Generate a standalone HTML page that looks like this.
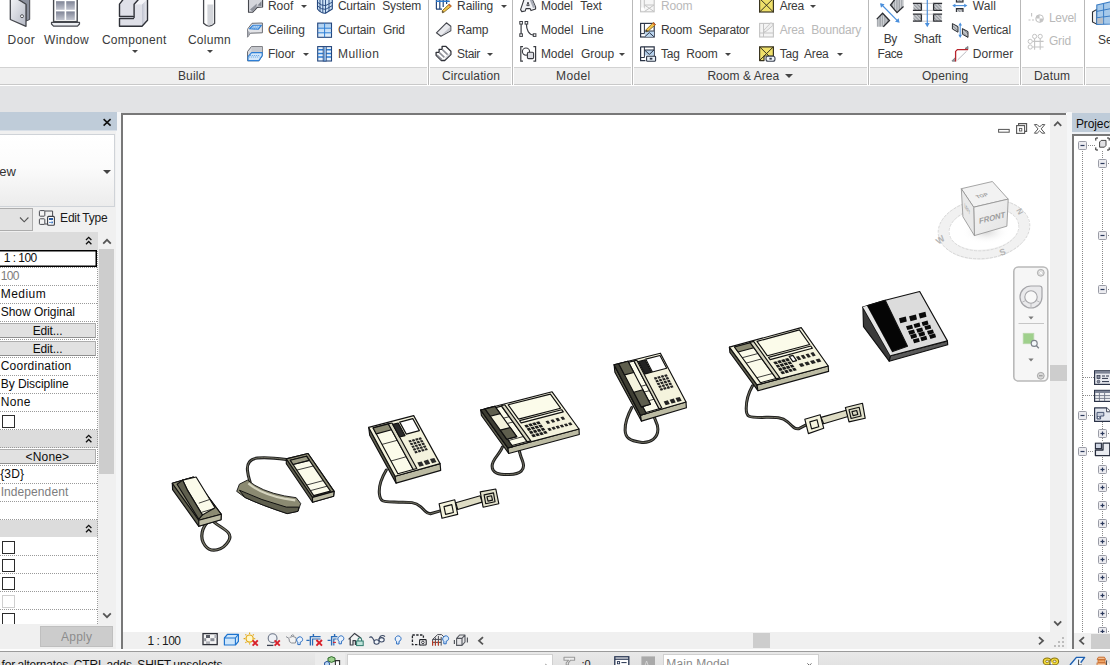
<!DOCTYPE html>
<html><head><meta charset="utf-8"><title>Autodesk Revit</title>
<style>
*{box-sizing:border-box;margin:0;padding:0}
html,body{width:1110px;height:665px;overflow:hidden;background:#e2e3e5;font-family:"Liberation Sans",sans-serif;font-size:12px;color:#3a3a3a}
.a{position:absolute}
.t{position:absolute;white-space:nowrap;line-height:14px;height:14px;font-size:12px}
.r{word-spacing:4.5px}
.dis{color:#b9b9b9}
.k{color:#111}
svg{position:absolute;overflow:visible}
.sep{position:absolute;top:0;width:1px;height:85px;background:#d9d9d9}
.band{position:absolute;top:68px;height:17px;background:#f0f0f0}
.dd{position:absolute;width:0;height:0;border-left:3px solid transparent;border-right:3px solid transparent;border-top:3px solid #444}
</style></head><body>

<div class="a" style="left:0;top:0;width:1110px;height:67px;background:#fff"></div>
<div class="a" style="left:0;top:67px;width:1110px;height:19px;background:#fff"></div>
<div class="a" style="left:0px;top:67px;width:427px;height:18px;background:#efefef;border-top:1px solid #d2d2d2;border-bottom:1px solid #c9c9c9"></div>
<div class="a" style="left:430px;top:67px;width:81px;height:18px;background:#efefef;border-top:1px solid #d2d2d2;border-bottom:1px solid #c9c9c9"></div>
<div class="a" style="left:514px;top:67px;width:117px;height:18px;background:#efefef;border-top:1px solid #d2d2d2;border-bottom:1px solid #c9c9c9"></div>
<div class="a" style="left:634px;top:67px;width:233px;height:18px;background:#efefef;border-top:1px solid #d2d2d2;border-bottom:1px solid #c9c9c9"></div>
<div class="a" style="left:870px;top:67px;width:149px;height:18px;background:#efefef;border-top:1px solid #d2d2d2;border-bottom:1px solid #c9c9c9"></div>
<div class="a" style="left:1022px;top:67px;width:61px;height:18px;background:#efefef;border-top:1px solid #d2d2d2;border-bottom:1px solid #c9c9c9"></div>
<div class="a" style="left:1086px;top:67px;width:25px;height:18px;background:#efefef;border-top:1px solid #d2d2d2;border-bottom:1px solid #c9c9c9"></div>
<div class="a" style="left:428px;top:0;width:1px;height:85px;background:#b9b9b9"></div>
<div class="a" style="left:512px;top:0;width:1px;height:85px;background:#b9b9b9"></div>
<div class="a" style="left:632px;top:0;width:1px;height:85px;background:#b9b9b9"></div>
<div class="a" style="left:868px;top:0;width:1px;height:85px;background:#b9b9b9"></div>
<div class="a" style="left:1020px;top:0;width:1px;height:85px;background:#b9b9b9"></div>
<div class="a" style="left:1084px;top:0;width:1px;height:85px;background:#b9b9b9"></div>
<span class="t" style="letter-spacing:0.39px;left:7.6px;top:32.5px;">Door</span>
<span class="t" style="letter-spacing:0.38px;left:44.1px;top:32.5px;">Window</span>
<span class="t" style="letter-spacing:0.31px;left:101.9px;top:32.5px;">Component</span>
<span class="t" style="letter-spacing:0.27px;left:187.9px;top:32.5px;">Column</span>
<i class="dd" style="left:131.5px;top:50px"></i>
<i class="dd" style="left:206.6px;top:50px"></i>
<span class="t" style="letter-spacing:-0.45px;left:883.8px;top:32.3px;">By</span>
<span class="t" style="letter-spacing:-0.45px;left:877.6px;top:47.4px;">Face</span>
<span class="t" style="letter-spacing:-0.11px;left:913.7px;top:32.3px;">Shaft</span>
<span class="t" style="left:1097.9px;top:32.5px;">Se</span>
<span class="t r" style="letter-spacing:0.05px;left:267.9px;top:-1.5px;">Roof</span>
<i class="dd" style="left:300.5px;top:5px"></i>
<span class="t r" style="letter-spacing:0.05px;left:267.9px;top:22.5px;">Ceiling</span>
<span class="t r" style="letter-spacing:-0.06px;left:267.9px;top:46.5px;">Floor</span>
<i class="dd" style="left:302.5px;top:53px"></i>
<span class="t r" style="letter-spacing:-0.20px;word-spacing:3.97px;left:337.9px;top:-1.5px;">Curtain System</span>
<span class="t r" style="letter-spacing:-0.19px;word-spacing:4.50px;left:337.9px;top:22.5px;">Curtain Grid</span>
<span class="t r" style="letter-spacing:0.50px;left:337.9px;top:46.5px;">Mullion</span>
<span class="t r" style="letter-spacing:-0.11px;left:457.1px;top:-1.5px;">Railing</span>
<i class="dd" style="left:500.7px;top:5px"></i>
<span class="t r" style="letter-spacing:-0.24px;left:457.1px;top:22.5px;">Ramp</span>
<span class="t r" style="letter-spacing:-0.40px;left:457.1px;top:46.5px;">Stair</span>
<i class="dd" style="left:487.3px;top:53px"></i>
<span class="t r" style="letter-spacing:-0.15px;word-spacing:4.50px;left:540.9px;top:-1.5px;">Model Text</span>
<span class="t r" style="letter-spacing:-0.05px;word-spacing:4.50px;left:540.9px;top:22.5px;">Model Line</span>
<span class="t r" style="letter-spacing:-0.06px;word-spacing:4.50px;left:540.9px;top:46.5px;">Model Group</span>
<i class="dd" style="left:619.4px;top:53px"></i>
<span class="t r dis" style="letter-spacing:-0.11px;left:660.9px;top:-1.5px;">Room</span>
<span class="t r" style="letter-spacing:-0.20px;word-spacing:3.15px;left:660.9px;top:22.5px;">Room Separator</span>
<span class="t r" style="letter-spacing:-0.20px;word-spacing:3.60px;left:660.9px;top:46.5px;">Tag Room</span>
<i class="dd" style="left:725.4px;top:53px"></i>
<span class="t r" style="letter-spacing:-0.29px;left:779.7px;top:-1.5px;">Area</span>
<i class="dd" style="left:809.6px;top:5px"></i>
<span class="t r dis" style="letter-spacing:-0.20px;word-spacing:3.94px;left:779.7px;top:22.5px;">Area Boundary</span>
<span class="t r" style="letter-spacing:-0.20px;word-spacing:3.13px;left:779.7px;top:46.5px;">Tag Area</span>
<i class="dd" style="left:836.6px;top:53px"></i>
<span class="t r" style="letter-spacing:0.14px;left:972.7px;top:-1.5px;">Wall</span>
<span class="t r" style="letter-spacing:-0.14px;left:972.7px;top:22.5px;">Vertical</span>
<span class="t r" style="letter-spacing:0.12px;left:972.7px;top:46.5px;">Dormer</span>
<span class="t r dis" style="letter-spacing:-0.27px;left:1048.9px;top:10.600000000000001px;">Level</span>
<span class="t r dis" style="letter-spacing:-0.16px;left:1048.9px;top:34.3px;">Grid</span>
<span class="t" style="letter-spacing:0.18px;left:177.9px;top:68.5px;">Build</span>
<span class="t" style="letter-spacing:0.13px;left:441.9px;top:68.5px;">Circulation</span>
<span class="t" style="letter-spacing:0.38px;left:556.0px;top:68.5px;">Model</span>
<span class="t" style="letter-spacing:0.05px;word-spacing:0.00px;left:707.4px;top:68.5px;">Room &amp; Area</span>
<span class="t" style="letter-spacing:0.15px;left:921.9px;top:68.5px;">Opening</span>
<span class="t" style="letter-spacing:0.21px;left:1033.9px;top:68.5px;">Datum</span>
<i class="dd" style="left:785.4px;top:74px;border-left-width:4px;border-right-width:4px;border-top-width:4px"></i>
<svg style="left:0;top:0" width="1110" height="90" viewBox="0 0 1110 90">
<defs>
<linearGradient id="gs" x1="0" y1="0" x2="1" y2="1"><stop offset="0" stop-color="#f4f5f8"/><stop offset="1" stop-color="#b4b8c4"/></linearGradient>
<linearGradient id="gp" x1="0" y1="0" x2="0" y2="1"><stop offset="0" stop-color="#7f8496"/><stop offset="1" stop-color="#c3c6d0"/></linearGradient>
<linearGradient id="gr" x1="0" y1="0" x2="1" y2="0"><stop offset="0" stop-color="#c0c3d0"/><stop offset="1" stop-color="#f0f0f4"/></linearGradient>
<linearGradient id="gb" x1="0" y1="0" x2="0" y2="1"><stop offset="0" stop-color="#a9cdf0"/><stop offset="1" stop-color="#e6f1fb"/></linearGradient>
<pattern id="hat" width="2.5" height="2.5" patternUnits="userSpaceOnUse" patternTransform="rotate(-45)"><rect width="2.5" height="2.5" fill="#c9cbcf"/><rect width="1" height="2.5" fill="#8f9399"/></pattern>
<pattern id="vst" width="2.4" height="2.4" patternUnits="userSpaceOnUse"><rect width="2.4" height="2.4" fill="#9fa3a8"/><rect width="1" height="2.4" fill="#d4d6da"/></pattern>
</defs>
<polygon points="16,-2 29.7,-2 29.7,19.5 26,21 26,4.3" fill="#8c919e" stroke="#45474d" stroke-width="1"/>
<polygon points="10.3,-2 10.3,19.5 26,26.3 26,4.3 16,-2" fill="url(#gs)" stroke="#45474d" stroke-width="1.3" stroke-linejoin="round"/>
<circle cx="22" cy="16.2" r="1.5" fill="#fff" stroke="#45474d" stroke-width="0.9"/>
<rect x="53.6" y="-3" width="23.6" height="24.6" fill="#fff" stroke="#45474d" stroke-width="1.4"/>
<rect x="56" y="1.2" width="8.6" height="8.6" fill="url(#gp)"/>
<rect x="66.2" y="1.2" width="8.6" height="8.6" fill="url(#gp)"/>
<rect x="56" y="11.4" width="8.6" height="8.6" fill="url(#gp)"/>
<rect x="66.2" y="11.4" width="8.6" height="8.6" fill="url(#gp)"/>
<path d="M51.5,22.3 H79.5 V24 L77.5,26.2 H53.5 L51.5,24 Z" fill="#eceef2" stroke="#45474d" stroke-width="1.2" stroke-linejoin="round"/>
<polygon points="123.5,-1 119.5,4.1 119.5,26.2 142,26.2 147.5,20.3 147.5,-1" fill="#dfe0e8"/>
<polygon points="142,26.2 147.5,20.3 147.5,-1 142,4" fill="url(#gr)"/>
<polygon points="134.1,4.3 138.9,-1 147.5,-1 142,4.5" fill="#f4f4f8"/>
<path d="M123.5,-1 L119.5,4.1 V16.4 H132.8 M119.5,18.6 V26.2 H142 L147.5,20.3 V-1 M138.9,-1 L134.1,4.3 V17.4 M119.5,18.5 H133.5" fill="none" stroke="#2f3138" stroke-width="1.4" stroke-linejoin="round" stroke-linecap="round"/>
<path d="M203.6,-2 V23.3 Q209,28.8 214.6,23.3 V-2" fill="#fff" stroke="#45474d" stroke-width="1.3"/>
<path d="M207.4,4.5 H213.3 V24 Q210,26 207.4,25.3 Z" fill="#d3d5da"/>
<polygon points="895.2,-1 890.5,5 897,12.6 903.5,6.5 903.5,-1" fill="url(#vst)"/>
<path d="M895.2,-1 L890.5,5 L897,12.6 L903.5,6.5" fill="none" stroke="#2c2e33" stroke-width="1.3"/>
<polygon points="876.8,19.1 882.6,13.3 889.5,20.5 883.3,26.7 876.8,26.7" fill="url(#vst)"/>
<path d="M876.8,19.1 L882.6,13.3 L889.5,20.5 L883.3,26.7" fill="none" stroke="#2c2e33" stroke-width="1.3"/>
<path d="M881,4 L898.5,21.8" stroke="#4a8fdc" stroke-width="1.2"/><path d="M880,3.2 L884.6,4.2 L881,7.8Z M899.6,22.8 L895,21.8 L898.6,18.2Z" fill="#4a8fdc"/>
<rect x="913.4" y="3.4" width="8.2" height="7" fill="url(#hat)"/>
<path d="M912.9,3.4 H922.1 M912.9,10.4 H922.1" stroke="#2c2e33" stroke-width="1.3"/>
<rect x="933.4" y="3.4" width="8.2" height="7" fill="url(#hat)"/>
<path d="M932.9,3.4 H942.1 M932.9,10.4 H942.1" stroke="#2c2e33" stroke-width="1.3"/>
<rect x="913.4" y="14.2" width="8.2" height="7" fill="url(#hat)"/>
<path d="M912.9,14.2 H922.1 M912.9,21.2 H922.1" stroke="#2c2e33" stroke-width="1.3"/>
<rect x="933.4" y="14.2" width="8.2" height="7" fill="url(#hat)"/>
<path d="M932.9,14.2 H942.1 M932.9,21.2 H942.1" stroke="#2c2e33" stroke-width="1.3"/>
<path d="M921.4,3.4 V10.4 M933.6,3.4 V10.4 M921.4,14.2 V21.2 M933.6,14.2 V21.2" stroke="#2c2e33" stroke-width="1.3"/>
<path d="M921.5,3.4 H933.5 M921.5,10.4 H933.5 M921.5,14.2 H933.5 M921.5,21.2 H933.5" stroke="#b5b7bb" stroke-width="0.8"/>
<path d="M927.3,-1 V25" stroke="#4a8fdc" stroke-width="1.2"/><path d="M927.3,27.2 L924.9,23 H929.7Z" fill="#4a8fdc"/>
<polygon points="248.5,-2 248.5,12.2 252.8,12.2 257.3,7.4 262.6,7 262.6,-2" fill="#d4d6dc" stroke="#45474d" stroke-width="1.1" stroke-linejoin="round"/>
<polygon points="250,9.5 252.5,11.5 256.5,6.8 256.8,3.5" fill="#8e929c"/><polygon points="261.5,1 261.5,6 257.5,5.6" fill="#7f838d"/>
<polygon points="248,28.5 252,23.3 262.4,23 262.4,32.8 250.5,33.2 247.5,37.2 247.5,29.6" fill="#e3e4e8" stroke="#6a6c72" stroke-width="1" stroke-linejoin="round"/>
<polygon points="249.4,28.8 252.9,25.3 261.4,25.3 258.4,29.2" fill="#bcd9f5" stroke="#2e7fd6" stroke-width="1.1" stroke-linejoin="round"/>
<path d="M251,27 H260 M250,28.2 H259" stroke="#2e7fd6" stroke-width="0.6" stroke-dasharray="1.2 0.8"/>
<polygon points="247.5,30 250.5,33.2 247.5,37.2" fill="#a5a8b0"/>
<polygon points="247.5,51.6 251.4,46.6 262.4,46.6 262.4,55.6 258.9,60.8 247.5,60.8" fill="#d9dade" stroke="#6a6c72" stroke-width="1" stroke-linejoin="round"/>
<polygon points="251.4,46.9 262.2,46.9 262.2,52 251.4,52" fill="#c6c8cd"/>
<polygon points="248,56.6 251.6,52.6 262.2,52.6 262.2,55.6 258.9,60.6 248,60.6" fill="#d5e8fa" stroke="#2e7fd6" stroke-width="1.1" stroke-linejoin="round"/>
<path d="M250,55.5 H260 M249,57 H259.5" stroke="#2e7fd6" stroke-width="0.6" stroke-dasharray="1.2 0.8"/>
<path d="M317.5,-2 V9 Q321,13.5 325.5,13.2 L332.3,9 V-2 Z" fill="#cfe4f8" stroke="#24467c" stroke-width="1.1" stroke-linejoin="round"/>
<path d="M317.5,2.2 Q321,5.8 325.5,5.6 L332.3,2.2 M317.5,5.8 Q321,9.6 325.5,9.4 L332.3,5.6 M320,-2 V11.5 M322.8,-2 V12.8 M325.5,-2 V13.2 M329,-2 V11" fill="none" stroke="#24467c" stroke-width="0.9"/>
<rect x="317.7" y="23.1" width="13.8" height="14.2" fill="url(#gb)" stroke="#24467c" stroke-width="1.1"/>
<path d="M324.6,23 V37.3 M317.7,28.2 H331.5 M317.7,32.8 H331.5" stroke="#2e7fd6" stroke-width="1"/>
<rect x="317.7" y="46.6" width="13.8" height="14.4" fill="#e9f3fc" stroke="#24467c" stroke-width="1.1"/>
<path d="M318,49.8 H331 M318,53.4 H331 M318,57 H331" stroke="#2e7fd6" stroke-width="1.5"/>
<rect x="323.2" y="46.6" width="3" height="14.4" fill="#dcebf9" stroke="#24467c" stroke-width="0.9"/><path d="M324.7,47 V61" stroke="#2e7fd6" stroke-width="0.8"/>
<path d="M436.4,-2 V9 M439.8,-2 V9 M443.2,-2 V7 M446.6,-2 V4 M436,1.3 H449.5 M436,9.2 H442" stroke="#24467c" stroke-width="1.2" fill="none"/>
<path d="M436,1.3 H449.5" stroke="#2e7fd6" stroke-width="1.3"/>
<polygon points="449.3,4 451.4,6.2 444.2,12 442.4,12.8 442.2,10.8" fill="#f3c64a" stroke="#7a5a18" stroke-width="0.8" stroke-linejoin="round"/><polygon points="442.2,10.8 442.4,12.8 444.2,12" fill="#444"/><polygon points="448.2,5 450.3,7.1 451.4,6.2 449.3,4" fill="#d9622b"/>
<polygon points="436.4,32.8 446.4,22.8 450.8,26.3 450.8,30.8 440.9,36.2" fill="#e9eaee" stroke="#45474d" stroke-width="1.1" stroke-linejoin="round"/>
<polygon points="450.3,26.8 450.3,30.5 441.2,35.5" fill="#c4c6cd"/>
<polygon points="436.1,52.3 439.1,52.3 439.1,49.3 442.1,49.3 442.1,46.3 445.7,46.3 450.9,51.3 450.9,54.6 444.7,60.5 441.4,60.5 436.1,55.2" fill="#fff" stroke="#2f3138" stroke-width="1.3" stroke-linejoin="round"/>
<path d="M439.4,52.6 L444.4,57.4 M442.4,49.6 L447.6,54.6 M437,55 L441.8,59.6" stroke="#8e9098" stroke-width="1.6" fill="none"/>
<path d="M445,59.6 L450.2,54.6 V52.4 L445.2,57.4 Z" fill="#c9cbd2"/>
<path d="M524.5,-2 L520.6,9.6 L521.8,11.6 L525.2,11 L526,8.6 L530.2,8.6 L531,10.6 L535.6,9 L535.6,7 L531.6,-2 Z" fill="#f1f2f5" stroke="#35373d" stroke-width="1.1" stroke-linejoin="round"/>
<polygon points="531.4,-2 535.4,7.2 533,8 529,-2" fill="#a8acb6"/><path d="M526.8,5.6 L528,2 L529.2,5.6 Z" fill="#fff" stroke="#35373d" stroke-width="0.9"/>
<path d="M521.1,24 V34 M526.4,24 C526.4,30 529,35 533.6,35.1" fill="none" stroke="#3a3c42" stroke-width="1.2"/>
<rect x="519.8000000000001" y="21.5" width="2.6" height="2.6" fill="#fff" stroke="#3a3c42" stroke-width="1"/>
<rect x="525.1" y="21.5" width="2.6" height="2.6" fill="#fff" stroke="#3a3c42" stroke-width="1"/>
<rect x="519.8000000000001" y="33.800000000000004" width="2.6" height="2.6" fill="#fff" stroke="#3a3c42" stroke-width="1"/>
<rect x="533.3000000000001" y="33.800000000000004" width="2.6" height="2.6" fill="#fff" stroke="#3a3c42" stroke-width="1"/>
<path d="M523,46.6 H520.8 V61.2 H523 M533.4,46.6 H535.6 V61.2 H533.4" fill="none" stroke="#3a3c42" stroke-width="1.2"/>
<circle cx="526" cy="51.6" r="3.6" fill="#fff" stroke="#3a3c42" stroke-width="1.1"/><rect x="527.4" y="52.2" width="6.2" height="6.4" rx="1.2" fill="#dcdde2" stroke="#3a3c42" stroke-width="1.1"/>
<rect x="640.6" y="-3" width="13.6" height="14.8" fill="#f6f6f6" stroke="#c4c4c4" stroke-width="1.1"/><path d="M644.5,5 L654,11.5 M654,5 L644.5,11.5 M644.5,5 H654 M644.3,-2 V8.5" stroke="#c4c4c4" stroke-width="1" fill="none"/><path d="M641,9 H644.3" stroke="#fff" stroke-width="3"/>
<rect x="640.6" y="23.4" width="13.6" height="13.6" fill="#fff" stroke="#2b3446" stroke-width="1.2"/>
<polygon points="644.8,31 654,31 654,36.8 644.8,36.8" fill="#bcd6ef"/><path d="M644.5,31 H654 M644.8,36.8 L649.3,32.6 L654,36.8 M644.4,23.4 V33.6 M640.6,33.6 H644.4" stroke="#2b3446" stroke-width="1" fill="none"/>
<polygon points="653.4,22.4 655.6,24.6 648.2,31 646.2,31.8 646,29.8" fill="#f3c64a" stroke="#7a5a18" stroke-width="0.8" stroke-linejoin="round"/><polygon points="646,29.8 646.2,31.8 648.2,31" fill="#333"/><polygon points="652.3,23.4 654.5,25.6 655.6,24.6 653.4,22.4" fill="#d9622b"/>
<path d="M640.6,46.8 H654.2 V56 M640.6,46.8 V60.6 H645.4" fill="none" stroke="#2b3446" stroke-width="1.2"/>
<polygon points="644.6,50 654,50 654,55.5 644.6,55.5" fill="#b4cfea"/><path d="M644.4,46.8 V57.5 M644.4,50 H654 M644.6,50 L649.3,54.4 L654,50 M640.6,57.5 H644.4" stroke="#2b3446" stroke-width="1" fill="none"/>
<rect x="646.6" y="56.2" width="9" height="5" rx="0.8" fill="#e9f1f9" stroke="#2b3446" stroke-width="1.1"/><rect x="649.8" y="57.8" width="2.6" height="1.8" fill="#2b3446"/>
<rect x="759.6" y="-3" width="13.8" height="15" fill="#efe06a" stroke="#3a3520" stroke-width="1.2"/><path d="M759.6,-1.5 L773.4,12 M773.4,-1.5 L759.6,12" stroke="#3a3520" stroke-width="1"/>
<rect x="759.6" y="23.4" width="13.8" height="13.6" fill="#f4f4f4" stroke="#c4c4c4" stroke-width="1.1"/><path d="M763.5,23.4 V37 M759.6,33 H773.4 M763.5,33 L773,24" stroke="#c4c4c4" stroke-width="1" fill="none"/><polygon points="771,22.6 773.4,25 766,31.4 764,32.2 763.8,30.2" fill="#eee" stroke="#c4c4c4" stroke-width="0.9"/>
<path d="M759.6,46.8 H773.4 V56 H764 V60.6 H759.6 Z" fill="#efe06a" stroke="#3a3520" stroke-width="1.2" stroke-linejoin="round"/><path d="M759.6,46.8 L769,56 M773.4,46.8 L760,60" stroke="#3a3520" stroke-width="1"/>
<rect x="766" y="56.2" width="9" height="5" rx="2" fill="#eef3f9" stroke="#3b4252" stroke-width="1.1"/><rect x="769.4" y="57.8" width="2.4" height="1.8" fill="#3b4252"/>
<rect x="956.4" y="-3" width="6.6" height="5" fill="url(#hat)" stroke="#2c2e33" stroke-width="1.1"/><rect x="956.4" y="8.6" width="6.6" height="3.4" fill="url(#hat)"/><path d="M956.4,12 V8.6 H963 V12" fill="none" stroke="#2c2e33" stroke-width="1.1"/>
<path d="M953.5,5.6 H966" stroke="#4a8fdc" stroke-width="1.1"/><path d="M952.2,5.6 L955.4,3.8 V7.4Z M967.4,5.6 L964.2,3.8 V7.4Z" fill="#4a8fdc"/>
<polygon points="952.4,23.6 958,26.6 958,32.2 952.4,29" fill="url(#hat)" stroke="#2c2e33" stroke-width="1"/><polygon points="962.4,28.6 968,31.6 968,37.4 962.4,34.2" fill="url(#hat)" stroke="#2c2e33" stroke-width="1"/>
<path d="M960.2,24 V36.4" stroke="#4a8fdc" stroke-width="1.1"/><path d="M960.2,22.4 L958.4,25.6 H962Z M960.2,38 L958.4,34.8 H962Z" fill="#4a8fdc"/>
<polygon points="965,48.4 968,46.4 968,49.6" fill="#9a9da3" stroke="#5a5c62" stroke-width="0.6"/><polygon points="952.2,60.6 955.4,57.4 955.4,61.2 952.2,61.2" fill="#9a9da3" stroke="#5a5c62" stroke-width="0.6"/>
<path d="M955.6,61.4 V51.4 L957.4,49.6 H968" fill="none" stroke="#b8242c" stroke-width="1.3"/><path d="M957.6,60 L966.6,51.2" stroke="#b0b2b8" stroke-width="0.9"/>
<path d="M1028.5,20 H1036" stroke="#c4c4c4" stroke-width="1.1" stroke-dasharray="2 1.5"/><path d="M1031.6,13 V16.5" stroke="#c4c4c4" stroke-width="1.1"/><circle cx="1039.6" cy="18.6" r="3.8" fill="#fff" stroke="#c4c4c4" stroke-width="1"/><path d="M1039.6,14.8 A3.8,3.8 0 0 0 1035.8,18.6 H1039.6Z M1039.6,22.4 A3.8,3.8 0 0 0 1043.4,18.6 H1039.6Z" fill="#c4c4c4"/>
<path d="M1034.6,38.6 V49.8 M1040.2,38.6 V49.8 M1032.4,41.4 H1043.6 M1032.4,47 H1043.6" stroke="#c4c4c4" stroke-width="1.1"/>
<circle cx="1034.6" cy="36.4" r="2.1" fill="#fff" stroke="#c4c4c4" stroke-width="1"/>
<circle cx="1040.2" cy="36.4" r="2.1" fill="#fff" stroke="#c4c4c4" stroke-width="1"/>
<circle cx="1030.2" cy="41.4" r="2.1" fill="#fff" stroke="#c4c4c4" stroke-width="1"/>
<circle cx="1030.2" cy="47" r="2.1" fill="#fff" stroke="#c4c4c4" stroke-width="1"/>
<polygon points="1092.5,12 1096.8,9.4 1096.8,24.2 1092.5,22" fill="#f0f0f0" stroke="#2c2e33" stroke-width="1.1"/>
<polygon points="1096.8,5 1112,1.5 1112,24 1096.8,24.4" fill="#a6c9ea" stroke="#3a7cc4" stroke-width="1.1"/>
<path d="M1096.8,11.4 L1112,8.4 M1096.8,17.8 L1112,15.8 M1103.6,3.6 V24.2" stroke="#3a7cc4" stroke-width="1"/><polygon points="1097.4,18.2 1103.2,17.4 1103.2,23.6 1097.4,23.8" fill="#b9bfc6"/>
</svg>
<div class="a" style="left:0;top:112px;width:116px;height:539px;background:#f0f0f0"></div>
<div class="a" style="left:116px;top:112px;width:5px;height:539px;background:#f5f6f7"></div>
<div class="a" style="left:0;top:112px;width:117px;height:19px;background:#bfccd9;border-bottom:1px solid #d9e0e8"></div>
<svg style="left:102px;top:118px" width="10" height="9" viewBox="0 0 10 9"><path d="M1.6,1.2 L8.6,7.6 M8.6,1.2 L1.6,7.6" stroke="#111" stroke-width="1.6"/></svg>
<div class="a" style="left:-2px;top:134px;width:117px;height:73px;background:linear-gradient(#ffffff 0%,#fbfbfb 45%,#ececec 100%);border:1px solid #cfd3d8"></div>
<span class="t" style="left:-0.7px;top:165.3px;font-size:13px;color:#333">ew</span>
<i class="dd" style="left:103px;top:170px;border-left-width:4px;border-right-width:4px;border-top-width:4px;border-top-color:#444"></i>
<div class="a" style="left:-2px;top:208px;width:35px;height:23px;background:#e2e2e2;border:1px solid #adadad"></div>
<svg style="left:19px;top:216px" width="11" height="8" viewBox="0 0 11 8"><path d="M1,1.5 L5.2,5.8 L9.4,1.5" fill="none" stroke="#555" stroke-width="1.1"/></svg>
<svg style="left:38px;top:209px" width="19" height="18" viewBox="0 0 19 18">
<rect x="1.4" y="1.6" width="5.4" height="5.6" rx="0.8" fill="#f4f4f4" stroke="#4a4c52" stroke-width="1"/>
<rect x="1.4" y="9.8" width="5.4" height="5.6" rx="0.8" fill="#f4f4f4" stroke="#4a4c52" stroke-width="1"/>
<path d="M6.8,2 H14.6 V7 M6.8,15 H9.5" fill="none" stroke="#4a4c52" stroke-width="1"/>
<rect x="9.6" y="7.4" width="6.8" height="8.8" rx="1" fill="#fff" stroke="#3c3e44" stroke-width="1.1"/>
<rect x="11" y="9" width="4" height="2" fill="#2e5c9e"/><path d="M11,13.4 H15 M13.6,12.2 L15,13.4 L13.6,14.6" fill="none" stroke="#2e6fc0" stroke-width="0.8"/>
</svg>
<span class="t k" style="letter-spacing:-0.20px;word-spacing:-0.70px;left:60.1px;top:210.8px;color:#1a1a1a">Edit Type</span>
<div class="a" style="left:0;top:232px;width:98px;height:392px;background:#fff"></div>
<div class="a" style="left:98px;top:232px;width:18px;height:392px;background:#f0f0f0"></div>
<div class="a" style="left:99px;top:249px;width:15px;height:225px;background:#cdcdcd"></div>
<svg style="left:102px;top:238px" width="10" height="7" viewBox="0 0 10 7"><path d="M1.2,5.6 L5,1.8 L8.8,5.6" fill="none" stroke="#555" stroke-width="1.8"/></svg>
<svg style="left:102px;top:612px" width="10" height="7" viewBox="0 0 10 7"><path d="M1.2,1.4 L5,5.2 L8.8,1.4" fill="none" stroke="#555" stroke-width="1.8"/></svg>
<div class="a" style="left:0;top:232px;width:98px;height:18px;background:#dcdcdc"></div>
<svg style="left:85px;top:236px" width="8" height="10" viewBox="0 0 8 10"><path d="M1,4 L3.7,1.3 L6.4,4 M1,8.2 L3.7,5.5 L6.4,8.2" fill="none" stroke="#111" stroke-width="1.3"/></svg>
<div class="a" style="left:0;top:430px;width:98px;height:18px;background:#dcdcdc"></div>
<svg style="left:85px;top:434px" width="8" height="10" viewBox="0 0 8 10"><path d="M1,4 L3.7,1.3 L6.4,4 M1,8.2 L3.7,5.5 L6.4,8.2" fill="none" stroke="#111" stroke-width="1.3"/></svg>
<div class="a" style="left:0;top:520px;width:98px;height:17px;background:#dcdcdc"></div>
<svg style="left:85px;top:524px" width="8" height="10" viewBox="0 0 8 10"><path d="M1,4 L3.7,1.3 L6.4,4 M1,8.2 L3.7,5.5 L6.4,8.2" fill="none" stroke="#111" stroke-width="1.3"/></svg>
<div class="a" style="left:0;top:267px;width:98px;height:1px;background:repeating-linear-gradient(90deg,#9a9a9a 0 1px,transparent 1px 2px)"></div>
<div class="a" style="left:0;top:285px;width:98px;height:1px;background:repeating-linear-gradient(90deg,#9a9a9a 0 1px,transparent 1px 2px)"></div>
<div class="a" style="left:0;top:303px;width:98px;height:1px;background:repeating-linear-gradient(90deg,#9a9a9a 0 1px,transparent 1px 2px)"></div>
<div class="a" style="left:0;top:321px;width:98px;height:1px;background:repeating-linear-gradient(90deg,#9a9a9a 0 1px,transparent 1px 2px)"></div>
<div class="a" style="left:0;top:339px;width:98px;height:1px;background:repeating-linear-gradient(90deg,#9a9a9a 0 1px,transparent 1px 2px)"></div>
<div class="a" style="left:0;top:357px;width:98px;height:1px;background:repeating-linear-gradient(90deg,#9a9a9a 0 1px,transparent 1px 2px)"></div>
<div class="a" style="left:0;top:375px;width:98px;height:1px;background:repeating-linear-gradient(90deg,#9a9a9a 0 1px,transparent 1px 2px)"></div>
<div class="a" style="left:0;top:393px;width:98px;height:1px;background:repeating-linear-gradient(90deg,#9a9a9a 0 1px,transparent 1px 2px)"></div>
<div class="a" style="left:0;top:411px;width:98px;height:1px;background:repeating-linear-gradient(90deg,#9a9a9a 0 1px,transparent 1px 2px)"></div>
<div class="a" style="left:0;top:429px;width:98px;height:1px;background:repeating-linear-gradient(90deg,#9a9a9a 0 1px,transparent 1px 2px)"></div>
<div class="a" style="left:0;top:447px;width:98px;height:1px;background:repeating-linear-gradient(90deg,#9a9a9a 0 1px,transparent 1px 2px)"></div>
<div class="a" style="left:0;top:465px;width:98px;height:1px;background:repeating-linear-gradient(90deg,#9a9a9a 0 1px,transparent 1px 2px)"></div>
<div class="a" style="left:0;top:483px;width:98px;height:1px;background:repeating-linear-gradient(90deg,#9a9a9a 0 1px,transparent 1px 2px)"></div>
<div class="a" style="left:0;top:501px;width:98px;height:1px;background:repeating-linear-gradient(90deg,#9a9a9a 0 1px,transparent 1px 2px)"></div>
<div class="a" style="left:0;top:519px;width:98px;height:1px;background:repeating-linear-gradient(90deg,#9a9a9a 0 1px,transparent 1px 2px)"></div>
<div class="a" style="left:0;top:555px;width:98px;height:1px;background:repeating-linear-gradient(90deg,#9a9a9a 0 1px,transparent 1px 2px)"></div>
<div class="a" style="left:0;top:573px;width:98px;height:1px;background:repeating-linear-gradient(90deg,#9a9a9a 0 1px,transparent 1px 2px)"></div>
<div class="a" style="left:0;top:591px;width:98px;height:1px;background:repeating-linear-gradient(90deg,#9a9a9a 0 1px,transparent 1px 2px)"></div>
<div class="a" style="left:0;top:609px;width:98px;height:1px;background:repeating-linear-gradient(90deg,#9a9a9a 0 1px,transparent 1px 2px)"></div>
<div class="a" style="left:97px;top:250px;width:1px;height:374px;background:repeating-linear-gradient(0deg,#9a9a9a 0 1px,transparent 1px 2px)"></div>
<div class="a" style="left:-2px;top:250px;width:99px;height:17px;background:#fff;border:1px solid #000;box-shadow:inset 0 0 0 0.5px #000"></div>
<span class="t" style="left:3.8px;top:251.10000000000002px;color:#0c0c0c;letter-spacing:-0.55px">1 : 100</span>
<span class="t" style="left:0.7px;top:269.1px;color:#7d7d7d;letter-spacing:-0.6px">100</span>
<span class="t" style="letter-spacing:0.46px;left:0.7px;top:287.1px;color:#0c0c0c">Medium</span>
<span class="t" style="letter-spacing:-0.03px;word-spacing:0.00px;left:0.7px;top:305.1px;color:#0c0c0c">Show Original</span>
<div class="a" style="left:-1px;top:323px;width:97px;height:15px;background:#e1e1e1;border:1px solid #adadad;border-bottom-color:#8f8f8f"></div>
<span class="t" style="letter-spacing:-0.15px;left:32.7px;top:323.8px;color:#0c0c0c">Edit...</span>
<div class="a" style="left:-1px;top:341px;width:97px;height:15px;background:#e1e1e1;border:1px solid #adadad;border-bottom-color:#8f8f8f"></div>
<span class="t" style="letter-spacing:-0.15px;left:32.7px;top:341.8px;color:#0c0c0c">Edit...</span>
<span class="t" style="letter-spacing:0.23px;left:0.7px;top:359.1px;color:#0c0c0c">Coordination</span>
<span class="t" style="letter-spacing:-0.05px;word-spacing:0.00px;left:0.7px;top:377.1px;color:#0c0c0c">By Discipline</span>
<span class="t" style="letter-spacing:0.34px;left:0.7px;top:395.1px;color:#0c0c0c">None</span>
<div class="a" style="left:2px;top:415px;width:13px;height:13px;background:#fff;border:1px solid #2b2b2b"></div>
<div class="a" style="left:-1px;top:449px;width:97px;height:15px;background:#e1e1e1;border:1px solid #adadad;border-bottom-color:#8f8f8f"></div>
<span class="t" style="letter-spacing:0.18px;left:25.5px;top:449.8px;color:#0c0c0c">&lt;None&gt;</span>
<span class="t" style="letter-spacing:0.15px;left:0.2px;top:467.3px;color:#0c0c0c">{3D}</span>
<span class="t" style="letter-spacing:0.08px;left:0.7px;top:485.3px;color:#7d7d7d">Independent</span>
<div class="a" style="left:2px;top:541px;width:13px;height:13px;background:#fff;border:1px solid #2b2b2b"></div>
<div class="a" style="left:2px;top:559px;width:13px;height:13px;background:#fff;border:1px solid #2b2b2b"></div>
<div class="a" style="left:2px;top:577px;width:13px;height:13px;background:#fff;border:1px solid #2b2b2b"></div>
<div class="a" style="left:2px;top:595px;width:13px;height:13px;background:#fff;border:1px solid #cfcfcf"></div>
<div class="a" style="left:2px;top:613px;width:13px;height:11px;background:#fff;border:1px solid #2b2b2b;border-bottom:none"></div>
<div class="a" style="left:40px;top:626px;width:73px;height:21px;background:#cccccc;border:1px solid #bfbfbf"></div>
<span class="t" style="letter-spacing:0.29px;left:60.9px;top:629.8px;color:#8c8c8c">Apply</span>
<div class="a" style="left:121px;top:113px;width:946px;height:538px;background:#fff"></div>
<div class="a" style="left:121px;top:113px;width:945px;height:2px;background:#787878"></div>
<div class="a" style="left:121px;top:113px;width:2px;height:536px;background:#787878"></div>
<div class="a" style="left:1067px;top:112px;width:5px;height:539px;background:#f5f6f7"></div>
<div class="a" style="left:1050px;top:115px;width:17px;height:518px;background:#f0f0f0"></div>
<div class="a" style="left:1050px;top:365px;width:17px;height:16px;background:#cdcdcd"></div>
<svg style="left:1053px;top:120px" width="10" height="7" viewBox="0 0 10 7"><path d="M1.2,5.8 L4.7,2.2 L8.2,5.8" fill="none" stroke="#555" stroke-width="1.8"/></svg>
<svg style="left:1053px;top:620px" width="10" height="7" viewBox="0 0 10 7"><path d="M1.2,1.4 L4.7,5 L8.2,1.4" fill="none" stroke="#555" stroke-width="1.8"/></svg>
<div class="a" style="left:123px;top:632px;width:944px;height:17px;background:#f0f0f0"></div>
<div class="a" style="left:753px;top:633px;width:17px;height:15px;background:#cdcdcd"></div>
<svg style="left:477px;top:636px" width="8" height="10" viewBox="0 0 8 10"><path d="M6,1.2 L2,4.8 L6,8.4" fill="none" stroke="#555" stroke-width="1.8"/></svg>
<svg style="left:1037px;top:636px" width="8" height="10" viewBox="0 0 8 10"><path d="M2,1.2 L6,4.8 L2,8.4" fill="none" stroke="#555" stroke-width="1.8"/></svg>
<svg style="left:1054px;top:637px" width="10" height="10" viewBox="0 0 10 10"><rect x="8" y="0" width="2" height="2" fill="#bdbdbd"/><rect x="4" y="4" width="2" height="2" fill="#bdbdbd"/><rect x="8" y="4" width="2" height="2" fill="#bdbdbd"/><rect x="0" y="8" width="2" height="2" fill="#bdbdbd"/><rect x="4" y="8" width="2" height="2" fill="#bdbdbd"/><rect x="8" y="8" width="2" height="2" fill="#bdbdbd"/></svg>
<span class="t" style="left:147.6px;top:633.9px;color:#1a1a1a;letter-spacing:-0.55px">1 : 100</span>
<svg style="left:996px;top:121px" width="52" height="15" viewBox="996 121 52 15">
<rect x="998.6" y="129.4" width="10.6" height="2.8" fill="#fff" stroke="#555" stroke-width="1"/>
<path d="M1018.6,125.6 V123.6 H1026.6 V131.4 H1024.6" fill="none" stroke="#555" stroke-width="1.1"/>
<rect x="1016.6" y="125.6" width="8" height="7.8" fill="#fff" stroke="#555" stroke-width="1.1"/>
<rect x="1019.4" y="128.4" width="2.4" height="2.6" fill="#fff" stroke="#555" stroke-width="0.9"/>
<path d="M1034.4,124.6 H1037.2 L1039.6,127 L1042,124.6 H1044.8 L1041.2,128.9 L1044.8,133.2 H1042 L1039.6,130.8 L1037.2,133.2 H1034.4 L1038,128.9 Z" fill="#fff" stroke="#555" stroke-width="1" stroke-linejoin="round"/>
</svg>
<svg style="left:195px;top:630px" width="280" height="19" viewBox="195 630 280 19">
<rect x="203" y="633.6" width="14.2" height="11" fill="#f4f4f4" stroke="#2e3038" stroke-width="1.3"/>
<rect x="206" y="635" width="4" height="3" fill="#5a5d66"/><rect x="210.4" y="638.2" width="4" height="3" fill="#8a8d96"/><rect x="204.2" y="638.2" width="2" height="3" fill="#8a8d96"/><rect x="206" y="641.4" width="4" height="2.6" fill="#b0b2b8"/><rect x="214.4" y="635" width="2.2" height="3" fill="#b0b2b8"/>
<path d="M224.4,638 L227.4,634.4 H238.4 V641.4 L235.4,645 H224.4 Z" fill="#cfe6fa" stroke="#1e74cf" stroke-width="1.2" stroke-linejoin="round"/><path d="M224.4,638 H235.4 V645 M235.4,638 L238.4,634.4" fill="none" stroke="#1e74cf" stroke-width="1.1"/>
<circle cx="249.6" cy="638.6" r="3.6" fill="#fff7c9" stroke="#e3a812" stroke-width="1.2"/><path d="M249.6,632.6 V634 M249.6,643.2 V644.6 M243.6,638.6 H245 M254.2,638.6 H255.2 M245.4,634.4 L246.4,635.4 M253.8,634.4 L252.8,635.4 M245.4,642.8 L246.4,641.8" stroke="#e3a812" stroke-width="1.1"/>
<path d="M252.6,640.4 L257.8,645.6 M257.8,640.4 L252.6,645.6" stroke="#d8202a" stroke-width="1.9"/>
<circle cx="272.6" cy="638.2" r="4.4" fill="#eef1f6" stroke="#6d7688" stroke-width="1.1"/><path d="M267,645.4 H273.4" stroke="#3a4050" stroke-width="1.3"/>
<path d="M274.6,640.4 L279.8,645.6 M279.8,640.4 L274.6,645.6" stroke="#d8202a" stroke-width="1.9"/>
<path d="M286,636.6 L289,638.4 Q288.6,642.6 291.6,643 H295.4 Q296.6,640 296,637.6 Q293,635.4 289.6,637.4 M291,635.8 Q292.6,634 294.2,635.6" fill="#f3f3f3" stroke="#8a8d94" stroke-width="1"/>
<path d="M298,637.6 a2.7,2.7 0 1 1 2.2,4.6 v2.4 h-2.4 v-2.4 a2.7,2.7 0 0 1 0.2,-4.6Z" fill="#eaf3fd" stroke="#2a6cc0" stroke-width="1"/>
<path d="M306.4,640.4 H309.4 M310.4,645.6 V636.6 H320.6 M313.4,634 V636" stroke="#2a6cb8" stroke-width="1.4" fill="none"/><path d="M312.6,645.6 V639 H320.6" stroke="#2a6cb8" stroke-width="1.2" fill="none"/>
<path d="M316.4,640 L322,645.6 M322,640 L316.4,645.6" stroke="#d8202a" stroke-width="1.9"/>
<path d="M327.6,640.4 H330.6 M331.6,645.6 V636.6 H337.4 M334.6,634 V636" stroke="#2a6cb8" stroke-width="1.4" fill="none"/><path d="M333.8,645.6 V639 H336.6" stroke="#2a6cb8" stroke-width="1.2" fill="none"/><path d="M333,642.4 H336" stroke="#d8202a" stroke-width="1"/>
<path d="M339.2,636.6 a2.7,2.7 0 1 1 2.2,4.6 v2.6 h-2.4 v-2.6 a2.7,2.7 0 0 1 0.2,-4.6Z" fill="#eaf3fd" stroke="#2a6cc0" stroke-width="1"/>
<path d="M348.6,639.4 L354.6,633.4 L360.8,638 M350.2,638.6 V645 H353 V640.6 H355.4 V645" fill="#f3f3f3" stroke="#3c3f48" stroke-width="1.2" stroke-linejoin="round"/>
<path d="M358,641 V639.6 a1.8,1.8 0 0 1 3.6,0 V641" fill="none" stroke="#2f7a6c" stroke-width="1.1"/><rect x="356.6" y="641" width="6.6" height="4.6" fill="#bfe3da" stroke="#2f7a6c" stroke-width="1"/>
<path d="M369.4,637.6 Q371,636 372.4,637.8 L374.6,641.4 M385,636.6 Q383,634.6 380.4,636.2 L378.8,639.6" fill="none" stroke="#3c4a66" stroke-width="1.1"/><ellipse cx="376.6" cy="642" rx="2.6" ry="2.2" fill="#f2f6fb" stroke="#3c4a66" stroke-width="1.1"/><ellipse cx="381.6" cy="639.8" rx="2.6" ry="2.2" fill="#f2f6fb" stroke="#3c4a66" stroke-width="1.1"/>
<path d="M396.4,636.6 a2.8,2.8 0 1 1 2.6,4.8 v2.6 h-2.4 v-2.6 a2.8,2.8 0 0 1 -0.2,-4.8Z" fill="#eaf3fd" stroke="#2a6cc0" stroke-width="1"/>
<rect x="412.4" y="635" width="11" height="9.6" fill="none" stroke="#22242a" stroke-width="1.3" stroke-dasharray="2.4 1.4"/><rect x="419.6" y="639.6" width="6.6" height="5.4" rx="0.8" fill="#fff" stroke="#22242a" stroke-width="1.1"/><circle cx="422.9" cy="642.4" r="1.3" fill="none" stroke="#22242a" stroke-width="0.9"/>
<path d="M432.6,645.6 V639.4 L437.6,634.6 H441.6 L444,637 M435.4,645.6 V637.6 M438.4,645.6 V636 M441.2,645.6 V637 M432.6,639.4 H441.2 M432.6,642.4 H441.2" fill="none" stroke="#4a4c54" stroke-width="1"/><path d="M432.6,645.6 V641 M435.4,645.6 V641 M438.4,645.6 V641" stroke="#c23a22" stroke-width="1.1"/>
<path d="M444,636.6 a2.7,2.7 0 1 1 2.2,4.6 v2.6 h-2.4 v-2.6 a2.7,2.7 0 0 1 0.2,-4.6Z" fill="#d7e9fb" stroke="#2a6cc0" stroke-width="1"/>
<path d="M456.6,638.4 L459.6,635 H465 V642 L462,645.4 H456.6 Z M456.6,638.4 H462 V645.4 M462,638.4 L465,635" fill="#e6e6e8" stroke="#55585f" stroke-width="1.1" stroke-linejoin="round"/><path d="M454.4,640 V644 M467.4,637.4 V642.4" stroke="#55585f" stroke-width="1.2"/>
</svg>
<svg style="left:930px;top:175px" width="130" height="215" viewBox="930 175 130 215">
<defs><radialGradient id="sh" cx="0.5" cy="0.5" r="0.5"><stop offset="0" stop-color="#d8d8d8"/><stop offset="1" stop-color="#ffffff" stop-opacity="0"/></radialGradient>
<linearGradient id="cf" x1="0" y1="0" x2="1" y2="1"><stop offset="0" stop-color="#f3f3f3"/><stop offset="1" stop-color="#e4e4e4"/></linearGradient></defs>
<g transform="rotate(-7 984 229)">
<ellipse cx="984" cy="229" rx="40.5" ry="25.5" fill="none" stroke="#f1f1f1" stroke-width="10"/>
<ellipse cx="984" cy="229" rx="46" ry="29.5" fill="none" stroke="#cfcfcf" stroke-width="0.8" stroke-dasharray="3 1.2"/>
<ellipse cx="984" cy="229" rx="35" ry="21.6" fill="none" stroke="#d4d4d4" stroke-width="0.8" stroke-dasharray="3 1.2"/>
</g>
<ellipse cx="986" cy="232" rx="24" ry="12" fill="url(#sh)"/>
<polygon points="961.3,188.7 992.4,181.5 1008.2,199.1 973.7,207.2" fill="#f2f2f2" stroke="#8f8f8f" stroke-width="0.8" stroke-linejoin="round"/>
<polygon points="973.7,207.2 1008.2,199.1 1006.9,226.2 974.4,235.6" fill="url(#cf)" stroke="#8f8f8f" stroke-width="0.8" stroke-linejoin="round"/>
<polygon points="961.3,188.7 973.7,207.2 974.4,235.6 962.9,216.7" fill="#e9e9e9" stroke="#8f8f8f" stroke-width="0.8" stroke-linejoin="round"/>
<text x="0" y="0" transform="matrix(0.93,-0.24,-0.03,1,979,224)" style="font-family:'Liberation Sans',sans-serif;font-weight:bold;fill:#9c9c9c;font-size:8.2px">FRONT</text>
<text x="0" y="0" transform="matrix(0.8,-0.2,0.5,0.55,977.5,198.5)" style="font-family:'Liberation Sans',sans-serif;font-weight:bold;fill:#9c9c9c;font-size:7px">TOP</text>
<text x="0" y="0" transform="matrix(0.35,0.55,0,1,964.5,207)" style="font-family:'Liberation Sans',sans-serif;font-weight:bold;fill:#9c9c9c;font-size:6px">LEFT</text>
<text x="0" y="0" transform="rotate(-35 940 240)" style="font-family:'Liberation Sans',sans-serif;font-weight:bold;fill:#9c9c9c;font-size:9px;fill:#b4b4b4" x="935" y="241"><tspan x="936" y="243">W</tspan></text>
<text transform="rotate(60 1021 213)" style="font-family:'Liberation Sans',sans-serif;font-weight:bold;fill:#9c9c9c;font-size:8px;fill:#b4b4b4"><tspan x="1016" y="216">N</tspan></text>
<text transform="rotate(-20 1003 252)" style="font-family:'Liberation Sans',sans-serif;font-weight:bold;fill:#9c9c9c;font-size:9px;fill:#b4b4b4"><tspan x="999.5" y="255">S</tspan></text>
<rect x="1013.8" y="267" width="34" height="114" rx="4.5" fill="#f6f6f6" stroke="#b9b9b9" stroke-width="1.6"/>
<circle cx="1040.8" cy="272.8" r="3.4" fill="#d9d9d9" stroke="#b0b0b0" stroke-width="1"/><path d="M1039.4,271.4 L1042.2,274.2 M1042.2,271.4 L1039.4,274.2" stroke="#fff" stroke-width="1"/>
<path d="M1031,286 A11,11 0 1 0 1042,297 V288.5 A2.5,2.5 0 0 0 1039.5,286 Z" fill="#e9e9eb" stroke="#a4a4a8" stroke-width="1.2"/>
<circle cx="1031" cy="297" r="6.2" fill="#f8f8f8" stroke="#a4a4a8" stroke-width="1.1"/><path d="M1022.4,302 L1026,300.4 M1039.6,302 L1036,300.4 M1031,303.2 V308" stroke="#b5b5b8" stroke-width="0.9"/>
<path d="M1028.4,316.6 H1033.6 L1031,319.4 Z" fill="#7a7a7a"/>
<path d="M1018.5,323.5 H1044" stroke="#c6c6c6" stroke-width="1"/>
<rect x="1023.2" y="333.3" width="10.6" height="10.4" fill="#9fd08c" stroke="#b8d8aa" stroke-width="0.8"/>
<circle cx="1034.2" cy="343.4" r="3" fill="#f4f8fb" stroke="#7d828a" stroke-width="1.1"/><path d="M1036.4,345.6 L1038.8,348.2" stroke="#7d828a" stroke-width="1.4"/>
<path d="M1028.4,358.6 H1033.6 L1031,361.4 Z" fill="#7a7a7a"/>
<circle cx="1040.8" cy="375.8" r="3.4" fill="#d9d9d9" stroke="#a8a8a8" stroke-width="1"/><path d="M1039,375.8 H1042.6" stroke="#8a8a8a" stroke-width="1"/>
</svg>
<svg style="left:123px;top:115px" width="927" height="517" viewBox="123 115 927 517">
<path d="M208.7,521.2 C202.4,526.6 198.8,537.4 205.1,545.6 S223.2,550.1 228.6,541.0 S221.3,528.4 214.1,522.1" fill="none" stroke="#1e1e1e" stroke-width="3.2" stroke-linecap="round" stroke-linejoin="round" shape-rendering="geometricPrecision"/>
<path d="M208.7,521.2 C202.4,526.6 198.8,537.4 205.1,545.6 S223.2,550.1 228.6,541.0 S221.3,528.4 214.1,522.1" fill="none" stroke="#7d7c6a" stroke-width="1.1" stroke-linecap="round" stroke-linejoin="round" shape-rendering="geometricPrecision"/>
<polygon points="172.3,483.3 193.4,477.0 221.3,514.3 221.0,519.8 198.8,526.3 172.6,489.6" fill="#5f5f4e" stroke="#101010" stroke-width="1.15" stroke-linejoin="round" />
<polygon points="172.3,483.3 193.4,477.0 221.3,514.3 198.8,520.3" fill="#8b8a72" stroke="#101010" stroke-width="1.15" stroke-linejoin="round" />
<polygon points="198.8,520.3 221.3,514.3 221.0,519.8 198.8,526.3" fill="#bcbba3" stroke="#101010" stroke-width="1.15" stroke-linejoin="round" />
<polygon points="182.6,480.1 196.1,477.0 215.0,507.7 202.4,514.9 187.1,489.6" fill="#fbfbea" stroke="#101010" stroke-width="1.15" stroke-linejoin="round" />
<polygon points="177.1,484.2 182.6,480.1 187.1,489.6 202.4,514.9 198.8,519.4" fill="#5f5f4e" stroke="#101010" stroke-width="1.15" stroke-linejoin="round" />
<path d="M198.8,503.2 L209.6,499.5 M201.9,512.2 L214.1,508.6" stroke="#101010" stroke-width="0.8"/>
<path d="M286.3,459.5 C275.5,458.0 264.7,457.1 257.4,458.0 S246.6,463.5 247.5,470.7 S249.3,478.8 250.2,482.4" fill="none" stroke="#1e1e1e" stroke-width="3.0" stroke-linecap="round" stroke-linejoin="round" shape-rendering="geometricPrecision"/>
<path d="M286.3,459.5 C275.5,458.0 264.7,457.1 257.4,458.0 S246.6,463.5 247.5,470.7 S249.3,478.8 250.2,482.4" fill="none" stroke="#7d7c6a" stroke-width="0.9" stroke-linecap="round" stroke-linejoin="round" shape-rendering="geometricPrecision"/>
<path d="M236.7,491.4 L239.4,484.2 L247.5,480.1 Q261.0,491.4 284.5,495.9 L296.2,497.7 L300.7,503.5 L298.0,511.3 L287.2,513.6 Q261.0,505.0 244.8,497.4 L238.0,492.3 Z" fill="#8b8a72" stroke="#101010" stroke-width="0.9" stroke-linejoin="round"/>
<path d="M248.4,483.3 Q261.0,494.1 284.5,498.6 L295.3,500.4" fill="none" stroke="#d6d5c0" stroke-width="2.2"/>
<path d="M239.4,490.2 Q261.0,500.4 286.3,507.1 L298.9,507.1 L298.0,511.3 L287.2,513.6 Q261.0,505.0 244.8,497.4 Z" fill="#5f5f4e" stroke="#101010" stroke-width="1"/>
<polygon points="286.3,458.9 308.0,453.5 334.1,491.4 333.6,496.3 312.5,502.3 286.3,463.8" fill="#5f5f4e" stroke="#101010" stroke-width="1.15" stroke-linejoin="round" />
<polygon points="286.3,458.9 308.0,453.5 334.1,491.4 312.5,497.4" fill="#8b8a72" stroke="#101010" stroke-width="1.15" stroke-linejoin="round" />
<polygon points="312.5,497.4 334.1,491.4 333.6,496.3 312.5,502.3" fill="#bcbba3" stroke="#101010" stroke-width="1.15" stroke-linejoin="round" />
<polygon points="290.3,460.2 306.5,456.2 330.5,491.1 313.7,495.6" fill="#fbfbea" stroke="#101010" stroke-width="1.15" stroke-linejoin="round" />
<polygon points="290.3,460.2 306.5,456.2 309.4,460.4 293.1,464.5" fill="#9c9b84" stroke="#101010" stroke-width="1.15" stroke-linejoin="round" />
<path d="M293.1,464.5 L309.4,460.4" stroke="#101010" stroke-width="0.8"/>
<path d="M296.8,470.1 L313.2,466.0" stroke="#101010" stroke-width="0.8"/>
<path d="M306.7,485.0 L323.3,480.6" stroke="#101010" stroke-width="0.8"/>
<path d="M310.5,490.6 L327.2,486.2" stroke="#101010" stroke-width="0.8"/>
<path d="M386.3,470.0 C381.4,478.2 378.5,486.1 379.4,493.9 S382.4,501.7 394.1,502.1 S413.7,500.7 420.5,506.6 S425.4,513.4 430.3,513.8 L439.5,511.1" fill="none" stroke="#1e1e1e" stroke-width="3.0" stroke-linecap="round" stroke-linejoin="round" shape-rendering="geometricPrecision"/>
<path d="M386.3,470.0 C381.4,478.2 378.5,486.1 379.4,493.9 S382.4,501.7 394.1,502.1 S413.7,500.7 420.5,506.6 S425.4,513.4 430.3,513.8 L439.5,511.1" fill="none" stroke="#7d7c6a" stroke-width="0.9" stroke-linecap="round" stroke-linejoin="round" shape-rendering="geometricPrecision"/>
<polygon points="368.7,427.4 395.1,476.3 396.1,483.1 369.7,435.2" fill="#5f5f4e" stroke="#101010" stroke-width="1.15" stroke-linejoin="round" />
<polygon points="395.1,476.3 440.1,463.6 440.7,470.4 396.1,483.1" fill="#bcbba3" stroke="#101010" stroke-width="1.15" stroke-linejoin="round" />
<polygon points="368.7,427.4 413.7,415.6 440.1,463.6 395.1,476.3" fill="#f4f3dd" stroke="#101010" stroke-width="1.15" stroke-linejoin="round" />
<polygon points="373.1,427.9 388.4,423.9 413.2,469.5 397.9,473.8" fill="#fbfbea" stroke="#101010" stroke-width="1.15" stroke-linejoin="round" />
<polygon points="373.1,427.9 388.4,423.9 391.6,429.8 376.3,433.9" fill="#8b8a72" stroke="#101010" stroke-width="1.15" stroke-linejoin="round" />
<path d="M382.0,444.4 L397.3,440.3" stroke="#101010" stroke-width="0.8"/>
<path d="M391.0,461.0 L406.3,456.7" stroke="#101010" stroke-width="0.8"/>
<polygon points="388.4,423.9 392.0,423.0 416.8,468.5 413.2,469.5" fill="#d9d8c2" stroke="#101010" stroke-width="1.15" stroke-linejoin="round" />
<polygon points="392.8,424.4 398.2,423.0 405.0,435.6 399.6,437.0" fill="#2a2a2a" stroke="#101010" stroke-width="1.15" stroke-linejoin="round" />
<polygon points="399.7,422.1 412.8,418.6 419.4,430.6 406.3,434.1" fill="#ffffff" stroke="#101010" stroke-width="1.15" stroke-linejoin="round" />
<polygon points="408.3,440.6 410.8,439.9 411.9,441.9 409.4,442.6" fill="#262626" stroke="none" stroke-width="0" stroke-linejoin="round" />
<polygon points="409.8,443.3 412.3,442.7 413.4,444.6 410.9,445.3" fill="#262626" stroke="none" stroke-width="0" stroke-linejoin="round" />
<polygon points="411.3,446.0 413.8,445.4 414.9,447.3 412.4,448.0" fill="#262626" stroke="none" stroke-width="0" stroke-linejoin="round" />
<polygon points="412.7,448.7 415.2,448.1 416.3,450.1 413.8,450.7" fill="#262626" stroke="none" stroke-width="0" stroke-linejoin="round" />
<polygon points="414.2,451.4 416.7,450.8 417.8,452.8 415.3,453.4" fill="#262626" stroke="none" stroke-width="0" stroke-linejoin="round" />
<polygon points="411.7,439.7 414.2,439.0 415.3,441.0 412.8,441.7" fill="#262626" stroke="none" stroke-width="0" stroke-linejoin="round" />
<polygon points="413.2,442.4 415.7,441.7 416.7,443.7 414.3,444.4" fill="#262626" stroke="none" stroke-width="0" stroke-linejoin="round" />
<polygon points="414.6,445.1 417.1,444.4 418.2,446.4 415.7,447.1" fill="#262626" stroke="none" stroke-width="0" stroke-linejoin="round" />
<polygon points="416.1,447.8 418.6,447.1 419.7,449.1 417.2,449.8" fill="#262626" stroke="none" stroke-width="0" stroke-linejoin="round" />
<polygon points="417.6,450.5 420.1,449.8 421.2,451.8 418.7,452.5" fill="#262626" stroke="none" stroke-width="0" stroke-linejoin="round" />
<polygon points="415.1,438.8 417.6,438.1 418.6,440.1 416.1,440.8" fill="#262626" stroke="none" stroke-width="0" stroke-linejoin="round" />
<polygon points="416.5,441.5 419.0,440.8 420.1,442.8 417.6,443.5" fill="#262626" stroke="none" stroke-width="0" stroke-linejoin="round" />
<polygon points="418.0,444.2 420.5,443.5 421.6,445.5 419.1,446.2" fill="#262626" stroke="none" stroke-width="0" stroke-linejoin="round" />
<polygon points="419.5,446.9 422.0,446.2 423.1,448.2 420.6,448.9" fill="#262626" stroke="none" stroke-width="0" stroke-linejoin="round" />
<polygon points="421.0,449.6 423.5,448.9 424.6,450.9 422.1,451.6" fill="#262626" stroke="none" stroke-width="0" stroke-linejoin="round" />
<polygon points="418.4,437.9 420.9,437.2 422.0,439.2 419.5,439.9" fill="#262626" stroke="none" stroke-width="0" stroke-linejoin="round" />
<polygon points="419.9,440.6 422.4,439.9 423.5,441.9 421.0,442.6" fill="#262626" stroke="none" stroke-width="0" stroke-linejoin="round" />
<polygon points="421.4,443.3 423.9,442.6 425.0,444.6 422.5,445.3" fill="#262626" stroke="none" stroke-width="0" stroke-linejoin="round" />
<polygon points="422.9,446.0 425.4,445.3 426.5,447.3 424.0,448.0" fill="#262626" stroke="none" stroke-width="0" stroke-linejoin="round" />
<polygon points="424.3,448.7 426.8,448.0 427.9,450.0 425.4,450.6" fill="#262626" stroke="none" stroke-width="0" stroke-linejoin="round" />
<polygon points="417.3,462.6 421.7,461.4 423.9,465.5 419.5,466.7" fill="#2a2a2a" stroke="none" stroke-width="0" stroke-linejoin="round" />
<polygon points="423.6,460.9 428.0,459.6 430.2,463.7 425.8,464.9" fill="#2a2a2a" stroke="none" stroke-width="0" stroke-linejoin="round" />
<polygon points="429.9,459.1 434.3,457.9 436.5,461.9 432.1,463.2" fill="#2a2a2a" stroke="none" stroke-width="0" stroke-linejoin="round" />
<polygon points="455.7,502.7 480.2,495.8 482.1,502.1 457.7,509.5" fill="#dedcc4" stroke="#101010" stroke-width="1.15" stroke-linejoin="round" />
<polygon points="439.1,503.7 454.8,499.8 457.7,514.4 442.0,518.3" fill="#f4f3dd" stroke="#101010" stroke-width="1.15" stroke-linejoin="round" />
<polygon points="444.0,506.6 451.8,504.6 453.4,512.5 445.6,514.4" fill="none" stroke="#101010" stroke-width="1.15" stroke-linejoin="round" />
<polygon points="480.2,491.9 495.8,489.0 498.8,503.7 483.1,507.2" fill="#e2e1cb" stroke="#101010" stroke-width="1.15" stroke-linejoin="round" />
<polygon points="484.1,494.9 493.5,492.9 495.0,501.7 485.7,503.7" fill="#d9d8c2" stroke="#101010" stroke-width="1.15" stroke-linejoin="round" />
<polygon points="487.0,496.8 491.5,495.8 492.5,500.1 488.0,501.1" fill="none" stroke="#101010" stroke-width="1.15" stroke-linejoin="round" />
<path d="M502.4,447.1 C500.0,454.2 492.1,459.0 492.1,466.1 S498.4,474.8 509.5,474.5 S525.3,470.0 522.9,462.1 S518.7,454.2 519.0,444.8" fill="none" stroke="#1e1e1e" stroke-width="3.0" stroke-linecap="round" stroke-linejoin="round" shape-rendering="geometricPrecision"/>
<path d="M502.4,447.1 C500.0,454.2 492.1,459.0 492.1,466.1 S498.4,474.8 509.5,474.5 S525.3,470.0 522.9,462.1 S518.7,454.2 519.0,444.8" fill="none" stroke="#7d7c6a" stroke-width="0.9" stroke-linecap="round" stroke-linejoin="round" shape-rendering="geometricPrecision"/>
<polygon points="480.7,410.0 507.9,447.9 508.7,453.5 481.4,415.5" fill="#5f5f4e" stroke="#101010" stroke-width="1.15" stroke-linejoin="round" />
<polygon points="507.9,447.9 579.0,429.0 579.3,434.5 508.7,453.5" fill="#bcbba3" stroke="#101010" stroke-width="1.15" stroke-linejoin="round" />
<polygon points="480.7,410.0 552.1,391.8 579.0,429.0 507.9,447.9" fill="#f4f3dd" stroke="#101010" stroke-width="1.15" stroke-linejoin="round" />
<polygon points="480.7,410.0 485.7,408.7 512.9,446.6 507.9,447.9" fill="#3e3e33" stroke="#101010" stroke-width="1.15" stroke-linejoin="round" />
<polygon points="486.6,409.9 501.5,406.1 527.0,441.5 512.1,445.5" fill="#fbfbea" stroke="#101010" stroke-width="1.15" stroke-linejoin="round" />
<path d="M494.2,420.6 L509.2,416.7" stroke="#101010" stroke-width="0.8"/>
<path d="M498.0,425.9 L513.0,422.0" stroke="#101010" stroke-width="0.8"/>
<path d="M508.5,440.5 L523.4,436.5" stroke="#101010" stroke-width="0.8"/>
<polygon points="485.0,408.9 495.0,406.4 516.7,436.6 506.7,439.2" fill="#f4f3dd" stroke="#101010" stroke-width="1.15" stroke-linejoin="round" />
<polygon points="485.0,408.9 495.0,406.4 500.2,413.6 490.2,416.2" fill="#5f5f4e" stroke="#101010" stroke-width="1.15" stroke-linejoin="round" />
<polygon points="500.2,430.1 510.2,427.5 516.7,436.6 506.7,439.2" fill="#5f5f4e" stroke="#101010" stroke-width="1.15" stroke-linejoin="round" />
<polygon points="501.3,405.7 504.8,404.8 530.8,440.9 527.3,441.9" fill="#d9d8c2" stroke="#101010" stroke-width="1.15" stroke-linejoin="round" />
<polygon points="508.2,404.8 550.4,394.1 560.6,408.2 518.5,419.1" fill="#fbfbea" stroke="#101010" stroke-width="1.15" stroke-linejoin="round" />
<polygon points="519.6,420.6 561.7,409.7 563.3,411.9 521.2,422.9" fill="#fbfbea" stroke="#101010" stroke-width="1.15" stroke-linejoin="round" />
<polygon points="524.3,425.2 527.3,424.4 529.1,426.9 526.0,427.7" fill="#1a1a1a" stroke="none" stroke-width="0" stroke-linejoin="round" />
<polygon points="526.6,428.4 529.6,427.6 531.4,430.1 528.3,430.9" fill="#1a1a1a" stroke="none" stroke-width="0" stroke-linejoin="round" />
<polygon points="528.8,431.6 531.9,430.8 533.7,433.2 530.6,434.1" fill="#1a1a1a" stroke="none" stroke-width="0" stroke-linejoin="round" />
<polygon points="531.1,434.8 534.2,434.0 536.0,436.4 532.9,437.3" fill="#1a1a1a" stroke="none" stroke-width="0" stroke-linejoin="round" />
<polygon points="528.2,424.1 531.2,423.3 533.0,425.8 530.0,426.6" fill="#1a1a1a" stroke="none" stroke-width="0" stroke-linejoin="round" />
<polygon points="530.5,427.3 533.5,426.5 535.3,429.0 532.3,429.8" fill="#1a1a1a" stroke="none" stroke-width="0" stroke-linejoin="round" />
<polygon points="532.8,430.5 535.8,429.7 537.6,432.2 534.6,433.0" fill="#1a1a1a" stroke="none" stroke-width="0" stroke-linejoin="round" />
<polygon points="535.1,433.7 538.1,432.9 539.9,435.4 536.9,436.2" fill="#1a1a1a" stroke="none" stroke-width="0" stroke-linejoin="round" />
<polygon points="532.1,423.1 535.1,422.3 536.9,424.8 533.9,425.6" fill="#1a1a1a" stroke="none" stroke-width="0" stroke-linejoin="round" />
<polygon points="534.4,426.3 537.4,425.5 539.2,428.0 536.2,428.8" fill="#1a1a1a" stroke="none" stroke-width="0" stroke-linejoin="round" />
<polygon points="536.7,429.5 539.7,428.7 541.5,431.2 538.5,432.0" fill="#1a1a1a" stroke="none" stroke-width="0" stroke-linejoin="round" />
<polygon points="539.0,432.7 542.0,431.9 543.8,434.4 540.8,435.2" fill="#1a1a1a" stroke="none" stroke-width="0" stroke-linejoin="round" />
<polygon points="536.0,422.1 539.1,421.3 540.8,423.8 537.8,424.6" fill="#1a1a1a" stroke="none" stroke-width="0" stroke-linejoin="round" />
<polygon points="538.3,425.3 541.4,424.5 543.1,427.0 540.1,427.8" fill="#1a1a1a" stroke="none" stroke-width="0" stroke-linejoin="round" />
<polygon points="540.6,428.5 543.6,427.7 545.4,430.1 542.4,430.9" fill="#1a1a1a" stroke="none" stroke-width="0" stroke-linejoin="round" />
<polygon points="542.9,431.7 545.9,430.8 547.7,433.3 544.7,434.1" fill="#1a1a1a" stroke="none" stroke-width="0" stroke-linejoin="round" />
<polygon points="545.5,421.2 548.2,420.5 550.2,423.3 547.5,424.0" fill="#222" stroke="none" stroke-width="0" stroke-linejoin="round" />
<polygon points="550.5,419.9 553.2,419.2 555.2,421.9 552.5,422.7" fill="#222" stroke="none" stroke-width="0" stroke-linejoin="round" />
<polygon points="555.4,418.6 558.2,417.8 560.2,420.6 557.5,421.4" fill="#222" stroke="none" stroke-width="0" stroke-linejoin="round" />
<polygon points="560.4,417.3 563.2,416.5 565.2,419.3 562.4,420.0" fill="#222" stroke="none" stroke-width="0" stroke-linejoin="round" />
<polygon points="547.3,428.5 550.0,427.7 551.8,430.2 549.1,430.9" fill="#222" stroke="none" stroke-width="0" stroke-linejoin="round" />
<polygon points="551.4,427.4 554.1,426.6 555.9,429.1 553.2,429.8" fill="#222" stroke="none" stroke-width="0" stroke-linejoin="round" />
<polygon points="555.6,426.3 558.3,425.6 560.1,428.0 557.4,428.7" fill="#222" stroke="none" stroke-width="0" stroke-linejoin="round" />
<polygon points="559.7,425.2 562.4,424.5 564.2,426.9 561.5,427.6" fill="#222" stroke="none" stroke-width="0" stroke-linejoin="round" />
<polygon points="563.9,424.1 566.6,423.4 568.4,425.8 565.7,426.5" fill="#222" stroke="none" stroke-width="0" stroke-linejoin="round" />
<polygon points="568.0,423.0 570.7,422.3 572.5,424.7 569.8,425.4" fill="#222" stroke="none" stroke-width="0" stroke-linejoin="round" />
<path d="M631.8,407.5 C628.1,414.4 624.8,422.7 625.1,430.2 S629.8,440.9 640.5,442.2 S657.9,437.6 657.9,429.3 S652.6,419.4 652.9,409.5" fill="none" stroke="#1e1e1e" stroke-width="3.0" stroke-linecap="round" stroke-linejoin="round" shape-rendering="geometricPrecision"/>
<path d="M631.8,407.5 C628.1,414.4 624.8,422.7 625.1,430.2 S629.8,440.9 640.5,442.2 S657.9,437.6 657.9,429.3 S652.6,419.4 652.9,409.5" fill="none" stroke="#7d7c6a" stroke-width="0.9" stroke-linecap="round" stroke-linejoin="round" shape-rendering="geometricPrecision"/>
<polygon points="614.1,364.8 640.5,415.3 641.4,421.1 614.9,372.3" fill="#5f5f4e" stroke="#101010" stroke-width="1.15" stroke-linejoin="round" />
<polygon points="640.5,415.3 686.0,402.0 686.4,407.8 641.4,421.1" fill="#bcbba3" stroke="#101010" stroke-width="1.15" stroke-linejoin="round" />
<polygon points="614.1,364.8 660.4,353.2 686.0,402.0 640.5,415.3" fill="#f4f3dd" stroke="#101010" stroke-width="1.15" stroke-linejoin="round" />
<polygon points="614.1,364.8 620.1,363.3 646.4,413.5 640.5,415.3" fill="#3e3e33" stroke="#101010" stroke-width="1.15" stroke-linejoin="round" />
<polygon points="620.6,364.3 634.0,360.9 659.1,408.7 645.9,412.5" fill="#fbfbea" stroke="#101010" stroke-width="1.15" stroke-linejoin="round" />
<path d="M639.9,386.6 L646.6,384.8" stroke="#101010" stroke-width="0.8"/>
<path d="M642.9,392.4 L649.6,390.6" stroke="#101010" stroke-width="0.8"/>
<path d="M647.5,401.0 L654.1,399.2" stroke="#101010" stroke-width="0.8"/>
<polygon points="618.7,363.7 628.0,361.3 650.5,404.3 641.4,406.9" fill="#f4f3dd" stroke="#101010" stroke-width="1.15" stroke-linejoin="round" />
<polygon points="618.7,363.7 628.0,361.3 633.8,372.5 624.6,374.9" fill="#5f5f4e" stroke="#101010" stroke-width="1.15" stroke-linejoin="round" />
<polygon points="633.7,392.2 642.8,389.7 650.5,404.3 641.4,406.9" fill="#5f5f4e" stroke="#101010" stroke-width="1.15" stroke-linejoin="round" />
<polygon points="634.0,360.9 636.8,360.2 661.8,407.9 659.1,408.7" fill="#d9d8c2" stroke="#101010" stroke-width="1.15" stroke-linejoin="round" />
<polygon points="638.5,361.5 645.0,359.9 651.5,372.2 645.0,373.9" fill="#222" stroke="#101010" stroke-width="1.15" stroke-linejoin="round" />
<polygon points="645.7,359.1 660.0,355.5 666.7,368.2 652.4,372.0" fill="#ffffff" stroke="#101010" stroke-width="1.15" stroke-linejoin="round" />
<polygon points="653.8,377.6 656.4,377.0 657.4,379.0 654.9,379.7" fill="#222" stroke="none" stroke-width="0" stroke-linejoin="round" />
<polygon points="655.3,380.4 657.8,379.7 658.9,381.8 656.3,382.5" fill="#222" stroke="none" stroke-width="0" stroke-linejoin="round" />
<polygon points="656.7,383.2 659.3,382.5 660.3,384.5 657.8,385.2" fill="#222" stroke="none" stroke-width="0" stroke-linejoin="round" />
<polygon points="658.2,385.9 660.7,385.3 661.8,387.3 659.2,388.0" fill="#222" stroke="none" stroke-width="0" stroke-linejoin="round" />
<polygon points="659.6,388.7 662.2,388.0 663.2,390.1 660.7,390.8" fill="#222" stroke="none" stroke-width="0" stroke-linejoin="round" />
<polygon points="657.2,376.7 659.8,376.0 660.9,378.1 658.3,378.8" fill="#222" stroke="none" stroke-width="0" stroke-linejoin="round" />
<polygon points="658.7,379.5 661.2,378.8 662.3,380.8 659.8,381.5" fill="#222" stroke="none" stroke-width="0" stroke-linejoin="round" />
<polygon points="660.1,382.2 662.7,381.6 663.8,383.6 661.2,384.3" fill="#222" stroke="none" stroke-width="0" stroke-linejoin="round" />
<polygon points="661.6,385.0 664.1,384.3 665.2,386.4 662.7,387.1" fill="#222" stroke="none" stroke-width="0" stroke-linejoin="round" />
<polygon points="663.0,387.8 665.6,387.1 666.7,389.1 664.1,389.8" fill="#222" stroke="none" stroke-width="0" stroke-linejoin="round" />
<polygon points="660.7,375.8 663.2,375.1 664.3,377.2 661.8,377.8" fill="#222" stroke="none" stroke-width="0" stroke-linejoin="round" />
<polygon points="662.1,378.6 664.7,377.9 665.8,379.9 663.2,380.6" fill="#222" stroke="none" stroke-width="0" stroke-linejoin="round" />
<polygon points="663.6,381.3 666.1,380.6 667.2,382.7 664.7,383.4" fill="#222" stroke="none" stroke-width="0" stroke-linejoin="round" />
<polygon points="665.0,384.1 667.6,383.4 668.6,385.4 666.1,386.1" fill="#222" stroke="none" stroke-width="0" stroke-linejoin="round" />
<polygon points="666.5,386.8 669.0,386.1 670.1,388.2 667.6,388.9" fill="#222" stroke="none" stroke-width="0" stroke-linejoin="round" />
<polygon points="664.1,374.9 666.7,374.2 667.8,376.2 665.2,376.9" fill="#222" stroke="none" stroke-width="0" stroke-linejoin="round" />
<polygon points="665.6,377.6 668.1,377.0 669.2,379.0 666.7,379.7" fill="#222" stroke="none" stroke-width="0" stroke-linejoin="round" />
<polygon points="667.0,380.4 669.6,379.7 670.6,381.7 668.1,382.4" fill="#222" stroke="none" stroke-width="0" stroke-linejoin="round" />
<polygon points="668.5,383.1 671.0,382.4 672.1,384.5 669.5,385.2" fill="#222" stroke="none" stroke-width="0" stroke-linejoin="round" />
<polygon points="669.9,385.9 672.5,385.2 673.5,387.2 671.0,387.9" fill="#222" stroke="none" stroke-width="0" stroke-linejoin="round" />
<polygon points="663.7,401.5 667.8,400.3 669.8,404.1 665.7,405.3" fill="#222" stroke="none" stroke-width="0" stroke-linejoin="round" />
<polygon points="669.6,399.8 673.8,398.6 675.7,402.4 671.6,403.6" fill="#222" stroke="none" stroke-width="0" stroke-linejoin="round" />
<polygon points="675.5,398.1 679.7,396.9 681.7,400.7 677.5,401.9" fill="#222" stroke="none" stroke-width="0" stroke-linejoin="round" />
<path d="M752.5,385.8 C748.9,392.2 746.2,399.4 746.2,408.4 S748.9,417.4 761.5,417.4 S781.3,416.5 787.6,421.9 S794.0,429.1 798.5,428.8 L806.6,424.6" fill="none" stroke="#1e1e1e" stroke-width="3.0" stroke-linecap="round" stroke-linejoin="round" shape-rendering="geometricPrecision"/>
<path d="M752.5,385.8 C748.9,392.2 746.2,399.4 746.2,408.4 S748.9,417.4 761.5,417.4 S781.3,416.5 787.6,421.9 S794.0,429.1 798.5,428.8 L806.6,424.6" fill="none" stroke="#7d7c6a" stroke-width="0.9" stroke-linecap="round" stroke-linejoin="round" shape-rendering="geometricPrecision"/>
<polygon points="729.4,347.1 757.0,384.9 757.9,390.7 729.9,352.5" fill="#5f5f4e" stroke="#101010" stroke-width="1.15" stroke-linejoin="round" />
<polygon points="757.0,384.9 828.2,366.0 828.6,371.4 757.9,390.7" fill="#bcbba3" stroke="#101010" stroke-width="1.15" stroke-linejoin="round" />
<polygon points="729.4,347.1 801.2,327.6 828.2,366.0 757.0,384.9" fill="#f4f3dd" stroke="#101010" stroke-width="1.15" stroke-linejoin="round" />
<polygon points="734.5,347.0 750.3,342.7 776.1,378.5 760.4,382.7" fill="#fbfbea" stroke="#101010" stroke-width="1.15" stroke-linejoin="round" />
<polygon points="734.5,347.0 750.3,342.7 753.9,347.7 738.1,352.0" fill="#8b8a72" stroke="#101010" stroke-width="1.15" stroke-linejoin="round" />
<path d="M742.3,357.7 L758.0,353.5" stroke="#101010" stroke-width="0.8"/>
<path d="M746.2,363.1 L761.9,358.8" stroke="#101010" stroke-width="0.8"/>
<path d="M756.8,377.7 L772.5,373.5" stroke="#101010" stroke-width="0.8"/>
<polygon points="750.0,342.4 753.6,341.4 779.9,377.9 776.4,378.9" fill="#d9d8c2" stroke="#101010" stroke-width="1.15" stroke-linejoin="round" />
<polygon points="757.0,341.4 799.4,329.9 809.7,344.5 767.4,355.8" fill="#fbfbea" stroke="#101010" stroke-width="1.15" stroke-linejoin="round" />
<polygon points="768.5,357.4 810.8,346.0 812.4,348.3 770.2,359.6" fill="#fbfbea" stroke="#101010" stroke-width="1.15" stroke-linejoin="round" />
<polygon points="773.2,362.0 776.3,361.2 778.1,363.7 775.1,364.5" fill="#1a1a1a" stroke="none" stroke-width="0" stroke-linejoin="round" />
<polygon points="775.6,365.2 778.6,364.4 780.4,366.9 777.4,367.7" fill="#1a1a1a" stroke="none" stroke-width="0" stroke-linejoin="round" />
<polygon points="777.9,368.5 781.0,367.6 782.8,370.2 779.7,371.0" fill="#1a1a1a" stroke="none" stroke-width="0" stroke-linejoin="round" />
<polygon points="780.2,371.7 783.3,370.9 785.1,373.4 782.0,374.2" fill="#1a1a1a" stroke="none" stroke-width="0" stroke-linejoin="round" />
<polygon points="777.2,360.9 780.2,360.1 782.0,362.6 779.0,363.5" fill="#1a1a1a" stroke="none" stroke-width="0" stroke-linejoin="round" />
<polygon points="779.5,364.2 782.6,363.3 784.4,365.9 781.3,366.7" fill="#1a1a1a" stroke="none" stroke-width="0" stroke-linejoin="round" />
<polygon points="781.8,367.4 784.9,366.6 786.7,369.1 783.6,369.9" fill="#1a1a1a" stroke="none" stroke-width="0" stroke-linejoin="round" />
<polygon points="784.1,370.6 787.2,369.8 789.0,372.4 786.0,373.2" fill="#1a1a1a" stroke="none" stroke-width="0" stroke-linejoin="round" />
<polygon points="781.1,359.9 784.2,359.1 786.0,361.6 782.9,362.4" fill="#1a1a1a" stroke="none" stroke-width="0" stroke-linejoin="round" />
<polygon points="783.4,363.1 786.5,362.3 788.3,364.8 785.2,365.6" fill="#1a1a1a" stroke="none" stroke-width="0" stroke-linejoin="round" />
<polygon points="785.7,366.4 788.8,365.5 790.6,368.1 787.6,368.9" fill="#1a1a1a" stroke="none" stroke-width="0" stroke-linejoin="round" />
<polygon points="788.1,369.6 791.1,368.8 792.9,371.3 789.9,372.1" fill="#1a1a1a" stroke="none" stroke-width="0" stroke-linejoin="round" />
<polygon points="785.0,358.8 788.1,358.0 789.9,360.5 786.8,361.4" fill="#1a1a1a" stroke="none" stroke-width="0" stroke-linejoin="round" />
<polygon points="787.3,362.1 790.4,361.2 792.2,363.8 789.2,364.6" fill="#1a1a1a" stroke="none" stroke-width="0" stroke-linejoin="round" />
<polygon points="789.7,365.3 792.7,364.5 794.5,367.0 791.5,367.8" fill="#1a1a1a" stroke="none" stroke-width="0" stroke-linejoin="round" />
<polygon points="792.0,368.6 795.0,367.7 796.9,370.3 793.8,371.1" fill="#1a1a1a" stroke="none" stroke-width="0" stroke-linejoin="round" />
<polygon points="789.2,356.4 792.9,355.4 796.6,360.6 792.9,361.6" fill="#fff" stroke="#101010" stroke-width="1.15" stroke-linejoin="round" />
<polygon points="795.9,356.7 798.8,356.0 801.3,359.5 798.4,360.2" fill="#222" stroke="none" stroke-width="0" stroke-linejoin="round" />
<polygon points="800.7,355.4 803.6,354.7 806.1,358.2 803.2,359.0" fill="#222" stroke="none" stroke-width="0" stroke-linejoin="round" />
<polygon points="805.5,354.2 808.4,353.4 810.9,356.9 808.0,357.7" fill="#222" stroke="none" stroke-width="0" stroke-linejoin="round" />
<polygon points="810.4,352.9 813.3,352.1 815.7,355.6 812.9,356.4" fill="#222" stroke="none" stroke-width="0" stroke-linejoin="round" />
<polygon points="798.8,364.0 802.4,363.1 804.5,366.0 800.9,367.0" fill="#222" stroke="none" stroke-width="0" stroke-linejoin="round" />
<polygon points="804.4,362.5 808.0,361.6 810.1,364.5 806.5,365.5" fill="#222" stroke="none" stroke-width="0" stroke-linejoin="round" />
<polygon points="810.0,361.0 813.7,360.1 815.8,363.0 812.1,364.0" fill="#222" stroke="none" stroke-width="0" stroke-linejoin="round" />
<polygon points="815.6,359.5 819.3,358.6 821.4,361.5 817.7,362.5" fill="#222" stroke="none" stroke-width="0" stroke-linejoin="round" />
<polygon points="821.0,417.4 846.3,410.2 848.1,416.5 823.7,423.7" fill="#dedcc4" stroke="#101010" stroke-width="1.15" stroke-linejoin="round" />
<polygon points="804.8,419.2 820.1,414.7 823.7,428.2 808.4,433.6" fill="#f4f3dd" stroke="#101010" stroke-width="1.15" stroke-linejoin="round" />
<polygon points="809.8,421.9 817.0,419.7 818.8,426.8 811.6,428.9" fill="none" stroke="#101010" stroke-width="1.15" stroke-linejoin="round" />
<polygon points="845.4,407.5 862.5,403.3 865.2,418.3 849.0,421.9" fill="#e2e1cb" stroke="#101010" stroke-width="1.15" stroke-linejoin="round" />
<polygon points="849.0,409.8 859.2,407.3 861.1,416.0 851.1,418.5" fill="#d9d8c2" stroke="#101010" stroke-width="1.15" stroke-linejoin="round" />
<polygon points="852.0,411.6 856.7,410.5 857.8,414.5 853.1,415.6" fill="none" stroke="#101010" stroke-width="1.15" stroke-linejoin="round" />
<polygon points="862.9,307.1 890.6,355.8 889.2,361.2 863.5,326.7" fill="#3a3a3a" stroke="#101010" stroke-width="1.15" stroke-linejoin="round" />
<polygon points="890.6,355.8 947.4,340.9 947.7,344.7 889.2,361.2" fill="#5a5a5a" stroke="#101010" stroke-width="1.15" stroke-linejoin="round" />
<polygon points="862.9,307.1 885.2,300.3 919.7,291.5 947.4,340.9 890.6,355.8" fill="#dcdcdc" stroke="#101010" stroke-width="1.15" stroke-linejoin="round" />
<polygon points="866.9,305.7 885.2,300.3 907.5,346.3 891.9,351.7" fill="#050505" stroke="#101010" stroke-width="1.15" stroke-linejoin="round" />
<polygon points="862.9,307.1 866.9,305.7 891.9,351.7 890.6,355.8" fill="#e6e6e6" stroke="none" stroke-width="0" stroke-linejoin="round" />
<polygon points="899.0,318.3 905.8,316.5 906.8,321.5 900.3,323.3" fill="#0a0a0a" stroke="none" stroke-width="0" stroke-linejoin="round" />
<polygon points="909.1,316.3 915.9,314.5 917.0,319.5 910.5,321.3" fill="#0a0a0a" stroke="none" stroke-width="0" stroke-linejoin="round" />
<polygon points="918.6,313.6 925.4,311.8 926.5,316.8 920.0,318.6" fill="#0a0a0a" stroke="none" stroke-width="0" stroke-linejoin="round" />
<polygon points="906.0,326.3 912.0,324.7 913.1,328.4 907.4,330.1" fill="#0a0a0a" stroke="none" stroke-width="0" stroke-linejoin="round" />
<polygon points="913.5,324.2 919.4,322.6 920.5,326.4 914.8,328.0" fill="#0a0a0a" stroke="none" stroke-width="0" stroke-linejoin="round" />
<polygon points="921.6,322.2 927.5,320.6 928.6,324.4 922.9,326.0" fill="#0a0a0a" stroke="none" stroke-width="0" stroke-linejoin="round" />
<polygon points="908.1,331.0 914.0,329.4 915.1,333.2 909.4,334.8" fill="#0a0a0a" stroke="none" stroke-width="0" stroke-linejoin="round" />
<polygon points="916.2,329.0 922.1,327.4 923.2,331.2 917.5,332.8" fill="#0a0a0a" stroke="none" stroke-width="0" stroke-linejoin="round" />
<polygon points="924.3,326.3 930.2,324.7 931.3,328.4 925.6,330.1" fill="#0a0a0a" stroke="none" stroke-width="0" stroke-linejoin="round" />
<polygon points="910.1,335.1 916.0,333.5 917.1,337.2 911.4,338.9" fill="#0a0a0a" stroke="none" stroke-width="0" stroke-linejoin="round" />
<polygon points="918.2,333.0 924.2,331.4 925.2,335.2 919.6,336.8" fill="#0a0a0a" stroke="none" stroke-width="0" stroke-linejoin="round" />
<polygon points="927.0,331.0 932.9,329.4 934.0,333.2 928.3,334.8" fill="#0a0a0a" stroke="none" stroke-width="0" stroke-linejoin="round" />
<polygon points="912.8,339.5 918.7,337.9 919.8,341.7 914.1,343.3" fill="#0a0a0a" stroke="none" stroke-width="0" stroke-linejoin="round" />
<polygon points="920.2,337.4 926.2,335.8 927.3,339.5 921.6,341.2" fill="#0a0a0a" stroke="none" stroke-width="0" stroke-linejoin="round" />
<polygon points="929.0,335.1 935.0,333.5 936.1,337.2 930.4,338.9" fill="#0a0a0a" stroke="none" stroke-width="0" stroke-linejoin="round" />
</svg>
<div class="a" style="left:1072px;top:113px;width:40px;height:19px;background:#bfccd9"></div>
<div class="a" style="left:1072px;top:132px;width:40px;height:2px;background:#eef1f5"></div>
<span class="t" style="left:1075.9px;top:116.5px;color:#0c0c0c;letter-spacing:-0.1px">Project</span>
<div class="a" style="left:1072px;top:134px;width:40px;height:516px;background:#fff;border-left:2px solid #787878;border-top:2px solid #787878"></div>
<div class="a" style="left:1074px;top:633px;width:36px;height:16px;background:#f0f0f0"></div>
<div class="a" style="left:1091px;top:634px;width:19px;height:15px;background:#cdcdcd"></div>
<svg style="left:1078px;top:636px" width="8" height="10" viewBox="0 0 8 10"><path d="M6,1.2 L2,4.8 L6,8.4" fill="none" stroke="#555" stroke-width="1.8"/></svg>
<svg style="left:1074px;top:136px;overflow:hidden" width="36" height="497" viewBox="1074 136 36 497">
<path d="M1082.5,151 V633" stroke="#8a8a8a" stroke-width="1" stroke-dasharray="1 1"/>
<path d="M1102.5,151 V285" stroke="#8a8a8a" stroke-width="1" stroke-dasharray="1 1"/>
<path d="M1102.5,422 V430 M1102.5,438 V442" stroke="#8a8a8a" stroke-width="1" stroke-dasharray="1 1"/>
<path d="M1102.5,457 V633" stroke="#8a8a8a" stroke-width="1" stroke-dasharray="1 1"/>
<path d="M1088,145.5 H1095" stroke="#8a8a8a" stroke-width="1" stroke-dasharray="1 1"/>
<path d="M1108,163.5 H1110" stroke="#8a8a8a" stroke-width="1" stroke-dasharray="1 1"/>
<path d="M1108,235.5 H1110" stroke="#8a8a8a" stroke-width="1" stroke-dasharray="1 1"/>
<path d="M1108,289.5 H1110" stroke="#8a8a8a" stroke-width="1" stroke-dasharray="1 1"/>
<path d="M1083,377.5 H1094" stroke="#8a8a8a" stroke-width="1" stroke-dasharray="1 1"/>
<path d="M1083,395.5 H1094" stroke="#8a8a8a" stroke-width="1" stroke-dasharray="1 1"/>
<path d="M1088,415.5 H1094" stroke="#8a8a8a" stroke-width="1" stroke-dasharray="1 1"/>
<path d="M1088,451.5 H1094" stroke="#8a8a8a" stroke-width="1" stroke-dasharray="1 1"/>
<rect x="1078.5" y="141.5" width="8" height="8" rx="1" fill="#ececf0" stroke="#9a9ca6" stroke-width="1"/>
<path d="M1080.5,145.5 H1084.5" stroke="#2b3a5c" stroke-width="1.2"/>
<rect x="1098.5" y="159.5" width="8" height="8" rx="1" fill="#ececf0" stroke="#9a9ca6" stroke-width="1"/>
<path d="M1100.5,163.5 H1104.5" stroke="#2b3a5c" stroke-width="1.2"/>
<rect x="1098.5" y="231.5" width="8" height="8" rx="1" fill="#ececf0" stroke="#9a9ca6" stroke-width="1"/>
<path d="M1100.5,235.5 H1104.5" stroke="#2b3a5c" stroke-width="1.2"/>
<rect x="1098.5" y="285.5" width="8" height="8" rx="1" fill="#ececf0" stroke="#9a9ca6" stroke-width="1"/>
<path d="M1100.5,289.5 H1104.5" stroke="#2b3a5c" stroke-width="1.2"/>
<rect x="1078.5" y="411.5" width="8" height="8" rx="1" fill="#ececf0" stroke="#9a9ca6" stroke-width="1"/>
<path d="M1080.5,415.5 H1084.5" stroke="#2b3a5c" stroke-width="1.2"/>
<rect x="1078.5" y="447.5" width="8" height="8" rx="1" fill="#ececf0" stroke="#9a9ca6" stroke-width="1"/>
<path d="M1080.5,451.5 H1084.5" stroke="#2b3a5c" stroke-width="1.2"/>
<rect x="1098.5" y="429.5" width="8" height="8" rx="1" fill="#ececf0" stroke="#9a9ca6" stroke-width="1"/>
<path d="M1100.5,433.5 H1104.5" stroke="#2b3a5c" stroke-width="1.2"/>
<path d="M1102.5,431.5 V435.5" stroke="#2b3a5c" stroke-width="1.2"/>
<path d="M1108,433.5 H1110" stroke="#8a8a8a" stroke-width="1" stroke-dasharray="1 1"/>
<rect x="1098.5" y="465.5" width="8" height="8" rx="1" fill="#ececf0" stroke="#9a9ca6" stroke-width="1"/>
<path d="M1100.5,469.5 H1104.5" stroke="#2b3a5c" stroke-width="1.2"/>
<path d="M1102.5,467.5 V471.5" stroke="#2b3a5c" stroke-width="1.2"/>
<path d="M1108,469.5 H1110" stroke="#8a8a8a" stroke-width="1" stroke-dasharray="1 1"/>
<rect x="1098.5" y="483.5" width="8" height="8" rx="1" fill="#ececf0" stroke="#9a9ca6" stroke-width="1"/>
<path d="M1100.5,487.5 H1104.5" stroke="#2b3a5c" stroke-width="1.2"/>
<path d="M1102.5,485.5 V489.5" stroke="#2b3a5c" stroke-width="1.2"/>
<path d="M1108,487.5 H1110" stroke="#8a8a8a" stroke-width="1" stroke-dasharray="1 1"/>
<rect x="1098.5" y="501.5" width="8" height="8" rx="1" fill="#ececf0" stroke="#9a9ca6" stroke-width="1"/>
<path d="M1100.5,505.5 H1104.5" stroke="#2b3a5c" stroke-width="1.2"/>
<path d="M1102.5,503.5 V507.5" stroke="#2b3a5c" stroke-width="1.2"/>
<path d="M1108,505.5 H1110" stroke="#8a8a8a" stroke-width="1" stroke-dasharray="1 1"/>
<rect x="1098.5" y="519.5" width="8" height="8" rx="1" fill="#ececf0" stroke="#9a9ca6" stroke-width="1"/>
<path d="M1100.5,523.5 H1104.5" stroke="#2b3a5c" stroke-width="1.2"/>
<path d="M1102.5,521.5 V525.5" stroke="#2b3a5c" stroke-width="1.2"/>
<path d="M1108,523.5 H1110" stroke="#8a8a8a" stroke-width="1" stroke-dasharray="1 1"/>
<rect x="1098.5" y="537.5" width="8" height="8" rx="1" fill="#ececf0" stroke="#9a9ca6" stroke-width="1"/>
<path d="M1100.5,541.5 H1104.5" stroke="#2b3a5c" stroke-width="1.2"/>
<path d="M1102.5,539.5 V543.5" stroke="#2b3a5c" stroke-width="1.2"/>
<path d="M1108,541.5 H1110" stroke="#8a8a8a" stroke-width="1" stroke-dasharray="1 1"/>
<rect x="1098.5" y="555.5" width="8" height="8" rx="1" fill="#ececf0" stroke="#9a9ca6" stroke-width="1"/>
<path d="M1100.5,559.5 H1104.5" stroke="#2b3a5c" stroke-width="1.2"/>
<path d="M1102.5,557.5 V561.5" stroke="#2b3a5c" stroke-width="1.2"/>
<path d="M1108,559.5 H1110" stroke="#8a8a8a" stroke-width="1" stroke-dasharray="1 1"/>
<rect x="1098.5" y="573.5" width="8" height="8" rx="1" fill="#ececf0" stroke="#9a9ca6" stroke-width="1"/>
<path d="M1100.5,577.5 H1104.5" stroke="#2b3a5c" stroke-width="1.2"/>
<path d="M1102.5,575.5 V579.5" stroke="#2b3a5c" stroke-width="1.2"/>
<path d="M1108,577.5 H1110" stroke="#8a8a8a" stroke-width="1" stroke-dasharray="1 1"/>
<rect x="1098.5" y="591.5" width="8" height="8" rx="1" fill="#ececf0" stroke="#9a9ca6" stroke-width="1"/>
<path d="M1100.5,595.5 H1104.5" stroke="#2b3a5c" stroke-width="1.2"/>
<path d="M1102.5,593.5 V597.5" stroke="#2b3a5c" stroke-width="1.2"/>
<path d="M1108,595.5 H1110" stroke="#8a8a8a" stroke-width="1" stroke-dasharray="1 1"/>
<rect x="1098.5" y="609.5" width="8" height="8" rx="1" fill="#ececf0" stroke="#9a9ca6" stroke-width="1"/>
<path d="M1100.5,613.5 H1104.5" stroke="#2b3a5c" stroke-width="1.2"/>
<path d="M1102.5,611.5 V615.5" stroke="#2b3a5c" stroke-width="1.2"/>
<path d="M1108,613.5 H1110" stroke="#8a8a8a" stroke-width="1" stroke-dasharray="1 1"/>
<rect x="1098.5" y="627.5" width="8" height="8" rx="1" fill="#ececf0" stroke="#9a9ca6" stroke-width="1"/>
<path d="M1100.5,631.5 H1104.5" stroke="#2b3a5c" stroke-width="1.2"/>
<path d="M1102.5,629.5 V633.5" stroke="#2b3a5c" stroke-width="1.2"/>
<path d="M1108,631.5 H1110" stroke="#8a8a8a" stroke-width="1" stroke-dasharray="1 1"/>
<path d="M1098,138 H1095.8 V140.6 M1095.8,147.4 V150 H1098 M1107,138 H1109.2 V140.6 M1109.2,147.4 V150 H1107" fill="none" stroke="#222" stroke-width="1"/>
<path d="M1099.6,142 L1101.2,140.4 H1106 V145.4 L1104.4,147.2 H1099.6 Z" fill="#e2e2e5" stroke="#333" stroke-width="0.9" stroke-linejoin="round"/>
<rect x="1094.6" y="370.8" width="16" height="13.6" fill="#e8eaf0" stroke="#2b3348" stroke-width="1.2"/><rect x="1095" y="371" width="15" height="2.6" fill="#7d8496"/>
<rect x="1097" y="375.6" width="3" height="3" fill="#8a90a0" stroke="#2b3348" stroke-width="0.7"/><circle cx="1098.5" cy="381.6" r="1.4" fill="#8a90a0" stroke="#2b3348" stroke-width="0.6"/><path d="M1102,376 H1105 M1106,376 H1109 M1102,378.4 H1108 M1102,381.6 H1109" stroke="#2b3348" stroke-width="1"/>
<rect x="1094.6" y="390.4" width="16" height="11" fill="#f2f3f6" stroke="#2b3348" stroke-width="1.2"/><rect x="1095" y="390.6" width="15" height="2.4" fill="#7d8496"/><path d="M1095,395.6 H1110 M1095,398.4 H1110 M1099.4,393 V401 M1104.6,393 V401" stroke="#6e7486" stroke-width="0.9"/>
<path d="M1094.6,407.8 H1106.6 L1110.6,411.8 V421.4 H1094.6 Z" fill="#e4e8f0" stroke="#2b3348" stroke-width="1.2" stroke-linejoin="round"/><path d="M1106.6,407.8 V411.8 H1110.6" fill="#fff" stroke="#2b3348" stroke-width="0.9"/><path d="M1097,419 V412.4 H1103.8 V416 H1100.6 V419 Z" fill="#c7cedc" stroke="#3b4a6a" stroke-width="0.9"/><rect x="1097.6" y="416.6" width="2" height="2" fill="#fff" stroke="#3b4a6a" stroke-width="0.6"/>
<path d="M1103,443.2 H1109.8 V455.6 H1095.4 V450 H1103 Z" fill="#e9ebf0" stroke="#262c3c" stroke-width="1.3" stroke-linejoin="round"/><rect x="1095.4" y="443.2" width="6" height="5.4" fill="#cfd6e4" stroke="#262c3c" stroke-width="1.1"/>
</svg>
<div class="a" style="left:0;top:649px;width:1110px;height:2px;background:#fdfdfd"></div>
<div class="a" style="left:0;top:651px;width:1110px;height:14px;background:linear-gradient(#e9e9e9,#e2e2e2)"></div>
<div class="a" style="left:0;top:651px;width:1110px;height:1px;background:#9b9b9b"></div>
<span class="t" style="letter-spacing:-0.20px;word-spacing:-0.62px;left:1.6px;top:658.4px;color:#111">for alternates, CTRL adds, SHIFT unselects</span>
<div class="a" style="left:315px;top:653px;width:30px;height:12px;background:#ececec"></div>
<div class="a" style="left:347px;top:654px;width:206px;height:12px;background:#fff;border:1px solid #d0d0d0"></div>
<div class="a" style="left:663px;top:654px;width:156px;height:12px;background:#fff;border:1px solid #d0d0d0"></div>
<span class="t" style="letter-spacing:0.10px;word-spacing:0.00px;left:666.3px;top:656.6px;color:#8a8a8a">Main Model</span>
<span class="t" style="left:581.5px;top:656.8px;color:#222;font-size:11px">:0</span>
<svg style="left:300px;top:652px" width="810" height="13" viewBox="300 652 810 13">
<path d="M328,661 L328,658 L331.5,656.6 L335,658 V661 L331.5,662.4Z" fill="#9bd08c" stroke="#2f6a2c" stroke-width="1"/>
<path d="M324.6,665 V662.6 L327,661.4 L329.4,662.6 V665" fill="#bcd8f5" stroke="#24509a" stroke-width="1"/>
<path d="M335.4,665 V660.6 H339.6 V665" fill="#fff" stroke="#333" stroke-width="1.1"/>
<path d="M545,664 L547.5,665.5" stroke="#aaa" stroke-width="1"/>
<path d="M564,657.2 H574.6 V660.2 H570.6 L568.4,662.8 V665 H566.2 V662.8 L568.6,660.2 H564 Z" fill="#ececec" stroke="#9a9a9a" stroke-width="1.1" stroke-linejoin="round"/>
<rect x="614.8" y="656.8" width="14" height="9" fill="#fff" stroke="#24324f" stroke-width="1.3"/><path d="M615,659.2 H628.6" stroke="#24324f" stroke-width="1.2"/><rect x="617.4" y="661.6" width="2.2" height="2.2" fill="none" stroke="#24324f" stroke-width="0.9"/><path d="M621.4,662.6 H626.6" stroke="#24324f" stroke-width="1"/>
<rect x="641.4" y="656.4" width="13.6" height="9" fill="#a9a9a9"/><path d="M645.2,665 L646.6,661 L648,665" fill="none" stroke="#d8d8d8" stroke-width="0.9"/>
<path d="M807.4,663.4 L809.4,665.4 L811.4,663.4" fill="none" stroke="#666" stroke-width="1"/>
<ellipse cx="1047.2" cy="661.4" rx="4" ry="3.4" fill="#f5dc3a" stroke="#8a7410" stroke-width="1.1"/><ellipse cx="1054.6" cy="661.4" rx="4" ry="3.4" fill="#f5dc3a" stroke="#8a7410" stroke-width="1.1"/><ellipse cx="1047.2" cy="661.4" rx="1.6" ry="1.2" fill="#e9e9e9" stroke="#8a7410" stroke-width="0.8"/><ellipse cx="1054.6" cy="661.4" rx="1.6" ry="1.2" fill="#e9e9e9" stroke="#8a7410" stroke-width="0.8"/>
<path d="M1050,660 L1050,665 L1053,665" fill="#fff" stroke="#333" stroke-width="0.9"/>
<path d="M1070,665 L1076.4,657.4 H1084.6 L1079,665" fill="#eaf3fc" stroke="#1d5fb0" stroke-width="1.4" stroke-linejoin="round"/><path d="M1078.6,659.6 V665 H1082" fill="#fff" stroke="#333" stroke-width="0.9"/>
<path d="M1098.4,657.2 H1104.4 L1105.6,659.4 H1097.2 Z" fill="#f7c9a0" stroke="#c86a2a" stroke-width="1"/><rect x="1098" y="660" width="7" height="2.4" fill="#f2a86a" stroke="#c86a2a" stroke-width="0.8"/><rect x="1097" y="663" width="9" height="2.6" fill="#f7c9a0" stroke="#c86a2a" stroke-width="0.8"/><path d="M1106.6,660.4 V665.5 L1110,665.5" fill="#fff" stroke="#333" stroke-width="0.9"/>
</svg>
</body></html>
